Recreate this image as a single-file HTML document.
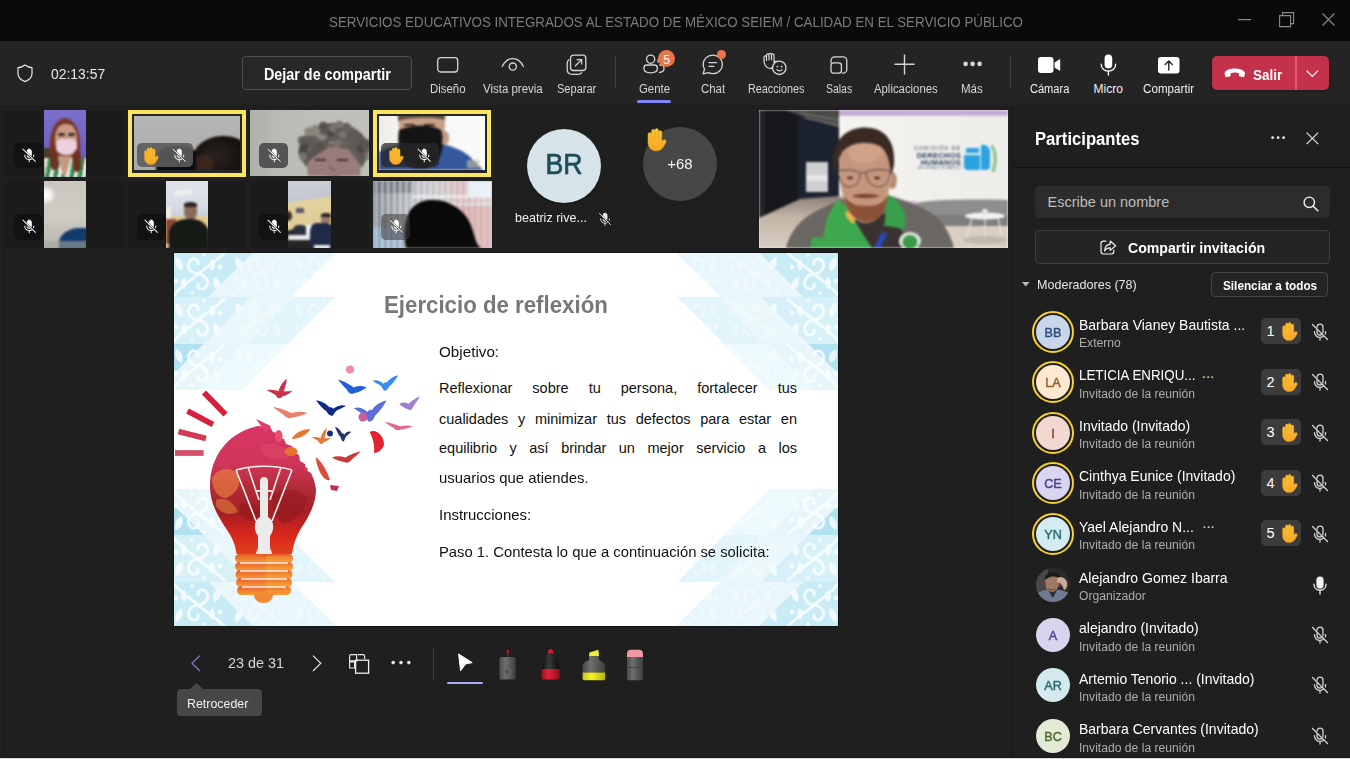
<!DOCTYPE html>
<html><head><meta charset="utf-8">
<style>
html,body{margin:0;padding:0;}
body{width:1350px;height:759px;position:relative;overflow:hidden;background:#1f1f1f;font-family:"Liberation Sans",sans-serif;}
.a{position:absolute;}
.t{position:absolute;white-space:nowrap;line-height:1;transform-origin:0 0;}
svg{position:absolute;overflow:visible;}
.lbl{position:absolute;white-space:nowrap;line-height:1;font-size:12px;color:#d6d6d6;top:82.5px;transform-origin:0 0;}
</style></head><body>
<svg width="0" height="0" style="position:absolute"><defs><linearGradient id="handg" x1="0" y1="0" x2="0" y2="1"><stop offset="0" stop-color="#fcc63c"/><stop offset="1" stop-color="#f6a623"/></linearGradient></defs></svg>
<!-- title bar -->
<div class="a" style="left:0;top:0;width:1350px;height:41px;background:#0a0a0a"></div>
<div class="t" style="left:328.5px;top:13.7px;font-size:15.5px;color:#7b7b7b;transform:scaleX(0.8605)">SERVICIOS EDUCATIVOS INTEGRADOS AL ESTADO DE MÉXICO SEIEM / CALIDAD EN EL SERVICIO PÚBLICO</div>
<svg style="left:1238px;top:19px" width="14" height="2"><rect x="0" y="0" width="13" height="1.2" fill="#8a8a8a"/></svg>
<svg style="left:1279px;top:12px" width="16" height="16"><path d="M0.6 3.6h11v11h-11z M3.6 3.6v-3h11v11h-3" fill="none" stroke="#8a8a8a" stroke-width="1.1"/></svg>
<svg style="left:1322px;top:13px" width="14" height="14"><path d="M0.5 0.5L12.5 12.5M12.5 0.5L0.5 12.5" stroke="#8a8a8a" stroke-width="1.1"/></svg>

<!-- toolbar -->
<div class="a" style="left:0;top:41px;width:1350px;height:64px;background:#242424"></div>
<svg style="left:17px;top:64px" width="17" height="19"><path d="M8 1 C5.5 3 3 3.6 1 3.6 V9.5 C1 13.5 4 16 8 17.6 C12 16 15 13.5 15 9.5 V3.6 C13 3.6 10.5 3 8 1Z" fill="none" stroke="#e6e6e6" stroke-width="1.2" stroke-linejoin="round"/></svg>
<div class="t" style="left:50.5px;top:67.2px;font-size:14.5px;color:#e8e8e8;transform:scaleX(0.96)">02:13:57</div>

<div class="a" style="left:242px;top:56px;width:168px;height:32px;border:1px solid #4e4e4e;border-radius:4px;background:#282828"></div>
<div class="t" style="left:263.5px;top:66.9px;font-size:15.6px;font-weight:bold;color:#fff;transform:scaleX(0.92)">Dejar de compartir</div>

<!-- Diseño -->
<svg style="left:437px;top:57px" width="22" height="16"><rect x="0.7" y="0.7" width="20" height="14.3" rx="3" fill="none" stroke="#d6d6d6" stroke-width="1.3"/></svg>
<div class="lbl" style="left:430px;transform:scaleX(0.95)">Diseño</div>
<!-- Vista previa -->
<svg style="left:501px;top:57px" width="24" height="16"><path d="M1.2 9.5 C4 3.5 8 1.6 11.8 1.6 C15.6 1.6 19.6 3.5 22.4 9.5" fill="none" stroke="#d6d6d6" stroke-width="1.3" stroke-linecap="round"/><circle cx="11.8" cy="9.6" r="3.6" fill="none" stroke="#d6d6d6" stroke-width="1.3"/></svg>
<div class="lbl" style="left:482.5px;transform:scaleX(0.955)">Vista previa</div>
<!-- Separar -->
<svg style="left:566px;top:54px" width="22" height="22"><path d="M3.3 5.5 C1.9 6.2 1.2 7.4 1.2 9 V15.5 C1.2 18.5 3 20.3 6 20.3 H12.5 C14.1 20.3 15.3 19.6 16 18.2" fill="none" stroke="#d6d6d6" stroke-width="1.3"/><rect x="4.5" y="1.2" width="15.3" height="15.3" rx="3" fill="none" stroke="#d6d6d6" stroke-width="1.3"/><path d="M9 12.2 L15.3 5.9 M10.6 5.6 H15.6 V10.6" fill="none" stroke="#d6d6d6" stroke-width="1.3"/></svg>
<div class="lbl" style="left:556.5px;transform:scaleX(0.92)">Separar</div>
<div class="a" style="left:614.5px;top:56px;width:1px;height:33px;background:#3d3d3d"></div>

<!-- Gente -->
<svg style="left:643px;top:54px" width="24" height="20"><circle cx="7.6" cy="5.2" r="4.1" fill="none" stroke="#d6d6d6" stroke-width="1.3"/><path d="M1 13.8 C1 12 2.3 11 4 11 H11.3 C13 11 14.3 12 14.3 13.8 V14.8 C14.3 17.4 11.6 18.8 7.6 18.8 C3.6 18.8 1 17.4 1 14.8Z" fill="none" stroke="#d6d6d6" stroke-width="1.3"/><path d="M16 18.5 C19.3 18.3 21 16.9 21 14.8 V13.8 C21 12 19.8 11 18.2 11 H16.3" fill="none" stroke="#d6d6d6" stroke-width="1.3"/><path d="M15.6 8.6 C14.6 7.4 14.8 5.2 16.4 4.4" fill="none" stroke="#d6d6d6" stroke-width="1.3"/></svg>
<div class="a" style="left:658.3px;top:50.2px;width:17px;height:17px;border-radius:50%;background:#e97548"></div>
<div class="t" style="left:663.3px;top:54.2px;font-size:12px;color:#fff">5</div>
<div class="lbl" style="left:638.5px;transform:scaleX(0.95)">Gente</div>
<div class="a" style="left:637px;top:100px;width:34px;height:2.5px;border-radius:2px;background:#7f85f5"></div>
<!-- Chat -->
<svg style="left:702px;top:54px" width="23" height="21"><path d="M10.8 1.2 C16.3 1.2 20.4 5.3 20.4 10.4 C20.4 15.5 16.3 19.6 10.8 19.6 C9.2 19.6 7.7 19.2 6.3 18.6 L1.2 19.8 L2.5 15 C1.7 13.6 1.2 12 1.2 10.4 C1.2 5.3 5.3 1.2 10.8 1.2Z" fill="none" stroke="#d6d6d6" stroke-width="1.3" stroke-linejoin="round"/><path d="M7 8.6 H14.6 M7 12.4 H11.8" stroke="#d6d6d6" stroke-width="1.3" stroke-linecap="round"/></svg>
<div class="a" style="left:717.2px;top:49.5px;width:9px;height:9px;border-radius:50%;background:#e97548"></div>
<div class="lbl" style="left:701px;transform:scaleX(0.95)">Chat</div>
<!-- Reacciones -->
<svg style="left:763px;top:53px" width="24" height="22"><path d="M9.8 13.8 L8.2 15.5 C6.3 15.5 3.6 14.6 2.2 12.3 C1.2 10.6 1 9 1 7 V4.2 C1 3.3 1.6 2.8 2.3 2.8 C3 2.8 3.5 3.3 3.5 4.2 V7.5 M3.5 6.5 V2.2 C3.5 1.4 4.1 0.9 4.8 0.9 C5.5 0.9 6 1.4 6 2.2 V6.8 M6 6.5 V1.6 C6 0.9 6.6 0.4 7.3 0.4 C8 0.4 8.5 0.9 8.5 1.6 V6.8 M8.5 6.5 V2.2 C8.5 1.4 9.1 0.9 9.8 0.9 C10.5 0.9 11 1.4 11 2.2 V9.5 C11.6 8.6 12.4 8 13.2 8" fill="none" stroke="#d6d6d6" stroke-width="1.25" stroke-linecap="round" stroke-linejoin="round"/><circle cx="16.3" cy="14.8" r="6.7" fill="#242424" stroke="#d6d6d6" stroke-width="1.3"/><circle cx="14.4" cy="13.6" r="0.9" fill="#d6d6d6"/><circle cx="18.6" cy="13.6" r="0.9" fill="#d6d6d6"/><path d="M13.9 16.6 C15.3 18.2 17.7 18.2 19.1 16.6" fill="none" stroke="#d6d6d6" stroke-width="1.2" stroke-linecap="round"/></svg>
<div class="lbl" style="left:748px;transform:scaleX(0.9)">Reacciones</div>
<!-- Salas -->
<svg style="left:829.5px;top:55.9px" width="18" height="18"><path d="M1 6.6 V4.6 C1 2.4 2.7 0.8 4.8 0.8 H13 C15.1 0.8 16.8 2.5 16.8 4.6 V13.4 C16.8 15.5 15.1 17.2 13 17.2 H12.4" fill="none" stroke="#d6d6d6" stroke-width="1.3" stroke-linecap="round"/><rect x="1" y="6.9" width="10.4" height="10.3" rx="2.6" fill="none" stroke="#d6d6d6" stroke-width="1.3"/></svg>
<div class="lbl" style="left:826px;transform:scaleX(0.87)">Salas</div>
<!-- Aplicaciones -->
<svg style="left:894px;top:54px" width="22" height="22"><path d="M10.5 0.5 V20.5 M0.5 10.2 H20.5" stroke="#d6d6d6" stroke-width="1.4"/></svg>
<div class="lbl" style="left:873.5px;transform:scaleX(0.945)">Aplicaciones</div>
<!-- Más -->
<svg style="left:963px;top:61px" width="20" height="6"><circle cx="2.6" cy="2.9" r="2.3" fill="#d6d6d6"/><circle cx="9.6" cy="2.9" r="2.3" fill="#d6d6d6"/><circle cx="16.6" cy="2.9" r="2.3" fill="#d6d6d6"/></svg>
<div class="lbl" style="left:961px;transform:scaleX(0.96)">Más</div>
<div class="a" style="left:1010px;top:56px;width:1px;height:33px;background:#3d3d3d"></div>
<!-- Cámara -->
<svg style="left:1038px;top:57px" width="23" height="17"><rect x="0" y="0" width="15.5" height="16" rx="3" fill="#ffffff"/><path d="M16.6 5.6 L21.2 2.4 C21.7 2.1 22.2 2.4 22.2 3 V13 C22.2 13.6 21.7 13.9 21.2 13.6 L16.6 10.4Z" fill="#ffffff"/></svg>
<div class="lbl" style="left:1029.5px;color:#f0f0f0;transform:scaleX(0.92)">Cámara</div>
<!-- Micro -->
<svg style="left:1100px;top:53.5px" width="17" height="22"><rect x="4.6" y="0.5" width="7.6" height="14" rx="3.8" fill="#ffffff"/><path d="M1.2 10.2 C1.2 14.4 4.4 17.2 8.4 17.2 C12.4 17.2 15.6 14.4 15.6 10.2" fill="none" stroke="#ffffff" stroke-width="1.3" stroke-linecap="round"/><path d="M8.4 17.2 V21" stroke="#ffffff" stroke-width="1.3" stroke-linecap="round"/></svg>
<div class="lbl" style="left:1093.5px;color:#f0f0f0;transform:scaleX(1.0)">Micro</div>
<!-- Compartir -->
<svg style="left:1157.5px;top:56.5px" width="22" height="17"><rect x="0" y="0" width="21.5" height="16.5" rx="3" fill="#ffffff"/><path d="M10.75 13 V4.2 M7.2 7.6 L10.75 4 L14.3 7.6" fill="none" stroke="#242424" stroke-width="1.4" stroke-linecap="round" stroke-linejoin="round"/></svg>
<div class="lbl" style="left:1143px;color:#f0f0f0;transform:scaleX(0.97)">Compartir</div>
<!-- Salir -->
<div class="a" style="left:1212px;top:56px;width:117px;height:34px;border-radius:5px;background:#c4314b;box-shadow:0 1px 3px rgba(0,0,0,0.35)"></div>
<div class="a" style="left:1295px;top:56px;width:1.5px;height:34px;background:#e8586f"></div>
<svg style="left:1223.5px;top:68px" width="22" height="10"><path d="M10.8 0.6 C6.5 0.6 3.2 1.8 1.4 3.6 C0.6 4.4 0.5 5.4 0.8 6.6 L1.3 8.2 C1.5 8.9 2.2 9.3 2.9 9.1 L5.6 8.5 C6.3 8.3 6.7 7.8 6.7 7.1 V5.2 C8 4.8 9.4 4.6 10.8 4.6 C12.2 4.6 13.6 4.8 14.9 5.2 V7.1 C14.9 7.8 15.3 8.3 16 8.5 L18.7 9.1 C19.4 9.3 20.1 8.9 20.3 8.2 L20.8 6.6 C21.1 5.4 21 4.4 20.2 3.6 C18.4 1.8 15.1 0.6 10.8 0.6Z" fill="#fff"/></svg>
<div class="t" style="left:1253px;top:66.7px;font-size:15.4px;font-weight:bold;color:#fff;transform:scaleX(0.875)">Salir</div>
<svg style="left:1306px;top:70px" width="13" height="8"><path d="M0.6 0.6 L6.3 6.3 L12 0.6" fill="none" stroke="#fff" stroke-width="1.2"/></svg>
<!-- video strip -->
<div class="a" style="left:6px;top:110px;width:118px;height:66px;background:#1b1b1b"></div><div class="a" style="left:250px;top:110px;width:119px;height:66px;background:#1b1b1b"></div><div class="a" style="left:6px;top:181px;width:118px;height:67px;background:#1b1b1b"></div><div class="a" style="left:128px;top:181px;width:118px;height:67px;background:#1b1b1b"></div><div class="a" style="left:250px;top:181px;width:119px;height:67px;background:#1b1b1b"></div><div class="a" style="left:43.5px;top:110px;width:42.5px;height:66.5px;overflow:hidden;background:linear-gradient(180deg,#7a70cc 0,#6d63bf 60%,#5e55ad 100%)"><div class="a" style="left:0;top:0;width:100%;height:100%;filter:blur(0.8px)">
<div class="a" style="left:-2px;top:38px;width:10px;height:30px;background:#4a3a2c"></div>
<div class="a" style="left:6px;top:8px;width:30px;height:52px;border-radius:50% 50% 30% 30%;background:#7a3624"></div>
<div class="a" style="left:11px;top:14px;width:22px;height:30px;border-radius:45%;background:#c99b84"></div>
<div class="a" style="left:14px;top:23px;width:7px;height:2.5px;background:#3a2a2a;border-radius:2px"></div><div class="a" style="left:24px;top:23px;width:7px;height:2.5px;background:#3a2a2a;border-radius:2px"></div>
<div class="a" style="left:12px;top:29px;width:21px;height:16px;border-radius:30% 30% 45% 45%;background:#ecd0de"></div>
<div class="a" style="left:0;top:48px;width:43px;height:20px;background:repeating-linear-gradient(100deg,#f1efe6 0 4px,#33a35a 4px 7px,#1d1d1d 7px 8px)"></div>
<div class="a" style="left:14px;top:46px;width:14px;height:20px;background:#c49a82;clip-path:polygon(0 0,100% 0,60% 100%,40% 100%)"></div>
<div class="a" style="left:6px;top:40px;width:8px;height:20px;background:#6e3020;border-radius:40%"></div>
<div class="a" style="left:29px;top:40px;width:8px;height:22px;background:#6e3020;border-radius:40%"></div>
</div>
</div><div class="a" style="left:14.3px;top:142.8px;width:28.8px;height:25px;border-radius:5px;background:#121212"></div><svg style="left:21.5px;top:148px" width="14.5" height="14.5" viewBox="0 0 18 18"><path d="M6.2 7 V4.4 C6.2 2.6 7.4 1.2 9 1.2 C10.6 1.2 11.8 2.6 11.8 4.4 V9 C11.8 9.4 11.7 9.8 11.6 10.2 M10.4 11.8 C10 12 9.5 12.1 9 12.1 C7.4 12.1 6.2 10.8 6.2 9" fill="#fff" stroke="#fff" stroke-width="0.8"/><path d="M3.4 8.8 C3.4 12 5.9 14.4 9 14.4 C10.3 14.4 11.4 14 12.3 13.3 M14.4 10.8 C14.5 10.2 14.6 9.6 14.6 8.8 M9 14.4 V17" fill="none" stroke="#f4f4f4" stroke-width="1.3" stroke-linecap="round"/><path d="M1.2 1.4 L16.6 16.6" stroke="#111" stroke-width="2.8" stroke-linecap="round" opacity="0.5"/><path d="M1.2 1.4 L16.6 16.6" stroke="#f4f4f4" stroke-width="1.3" stroke-linecap="round"/></svg><div class="a" style="left:128px;top:109.5px;width:118px;height:67px;background:#fbe561"></div>
<div class="a" style="left:132px;top:113.5px;width:110px;height:59px;background:#262626"></div>
<div class="a" style="left:134px;top:115.8px;width:106px;height:54px;overflow:hidden;background:linear-gradient(180deg,#b6b6b4 0,#b0b0ae 50%,#a9a9a7 100%)"><div class="a" style="left:0;top:0;width:100%;height:100%;filter:blur(0.8px)">
<div class="a" style="left:58px;top:20px;width:60px;height:50px;border-radius:50% 45% 0 0;background:radial-gradient(ellipse at 40% 40%,#2a2320 0,#120e0c 60%)"></div>
<div class="a" style="left:60px;top:38px;width:20px;height:20px;border-radius:50%;background:#4a2e20;opacity:0.6"></div>
<div class="a" style="left:22px;top:30px;width:40px;height:30px;border-radius:40% 30% 0 0;background:#0b0e16"></div>
</div>
</div>
<div class="a" style="left:136.5px;top:142.8px;width:56.5px;height:24.6px;border-radius:5px;background:rgba(92,92,92,0.9)"></div><svg style="left:143px;top:147px" width="16" height="17.9" viewBox="0 0 17 19"><path transform="translate(17 0) scale(-1 1)" d="M4.2 10.5 V3.6 C4.2 2.7 4.8 2.1 5.6 2.1 C6.4 2.1 7 2.7 7 3.6 V8.6 V1.9 C7 1 7.6 0.4 8.4 0.4 C9.2 0.4 9.8 1 9.8 1.9 V8.6 V2.6 C9.8 1.7 10.4 1.1 11.2 1.1 C12 1.1 12.6 1.7 12.6 2.6 V9.6 V5.2 C12.6 4.3 13.2 3.7 14 3.7 C14.8 3.7 15.4 4.3 15.4 5.2 V11.4 C15.4 15.6 12.7 18.6 8.6 18.6 C5.6 18.6 3.8 17 2.5 14.6 L0.9 11.7 C0.5 10.9 0.7 10.1 1.4 9.7 C2.1 9.3 2.9 9.5 3.4 10.2 Z" fill="url(#handg)" stroke="#eaa21a" stroke-width="0.4"/></svg><svg style="left:172px;top:148px" width="14.5" height="14.5" viewBox="0 0 18 18"><path d="M6.2 7 V4.4 C6.2 2.6 7.4 1.2 9 1.2 C10.6 1.2 11.8 2.6 11.8 4.4 V9 C11.8 9.4 11.7 9.8 11.6 10.2 M10.4 11.8 C10 12 9.5 12.1 9 12.1 C7.4 12.1 6.2 10.8 6.2 9" fill="#fff" stroke="#fff" stroke-width="0.8"/><path d="M3.4 8.8 C3.4 12 5.9 14.4 9 14.4 C10.3 14.4 11.4 14 12.3 13.3 M14.4 10.8 C14.5 10.2 14.6 9.6 14.6 8.8 M9 14.4 V17" fill="none" stroke="#f4f4f4" stroke-width="1.3" stroke-linecap="round"/><path d="M1.2 1.4 L16.6 16.6" stroke="#111" stroke-width="2.8" stroke-linecap="round" opacity="0.5"/><path d="M1.2 1.4 L16.6 16.6" stroke="#f4f4f4" stroke-width="1.3" stroke-linecap="round"/></svg><div class="a" style="left:250px;top:110px;width:118.5px;height:66px;overflow:hidden;background:linear-gradient(90deg,#b3b7ae 0,#bcbdb6 35%,#c0c0bb 100%)">
<svg style="left:0;top:0;filter:blur(0.8px)" width="119" height="66">
<ellipse cx="84" cy="40" rx="35" ry="27" fill="#5e5955"/>
<circle cx="66.2" cy="33.6" r="3.4" fill="#65605b"/><circle cx="82.2" cy="34.9" r="4.0" fill="#8a847e"/><circle cx="67.6" cy="22.4" r="5.0" fill="#8a847e"/><circle cx="86.8" cy="33.8" r="3.5" fill="#7a746e"/><circle cx="65.8" cy="19.5" r="4.8" fill="#8a847e"/><circle cx="100.4" cy="38.2" r="2.7" fill="#65605b"/><circle cx="52.9" cy="42.1" r="4.6" fill="#4a4541"/><circle cx="82.1" cy="39.9" r="4.7" fill="#8a847e"/><circle cx="76.9" cy="42.8" r="3.6" fill="#7a746e"/><circle cx="59.2" cy="21.8" r="4.9" fill="#8a847e"/><circle cx="103.0" cy="44.8" r="3.6" fill="#8a847e"/><circle cx="89.0" cy="33.2" r="3.5" fill="#7a746e"/><circle cx="111.5" cy="38.6" r="4.8" fill="#4a4541"/><circle cx="117.4" cy="38.2" r="2.9" fill="#4a4541"/><circle cx="115.6" cy="46.6" r="3.9" fill="#7a746e"/><circle cx="93.0" cy="49.6" r="3.2" fill="#5a5550"/><circle cx="54.3" cy="44.7" r="5.0" fill="#5a5550"/><circle cx="73.4" cy="16.4" r="4.7" fill="#5a5550"/><circle cx="70.0" cy="41.7" r="4.7" fill="#5a5550"/><circle cx="91.1" cy="41.4" r="3.4" fill="#65605b"/><circle cx="72.5" cy="45.7" r="5.0" fill="#65605b"/><circle cx="86.4" cy="48.2" r="4.9" fill="#4a4541"/><circle cx="91.5" cy="19.6" r="2.6" fill="#4a4541"/><circle cx="71.3" cy="48.5" r="4.7" fill="#8a847e"/><circle cx="75.6" cy="45.3" r="3.5" fill="#65605b"/><circle cx="96.3" cy="17.7" r="4.9" fill="#65605b"/><circle cx="68.4" cy="36.8" r="4.3" fill="#4a4541"/><circle cx="79.7" cy="23.3" r="3.3" fill="#4a4541"/><circle cx="89.4" cy="14.7" r="4.0" fill="#7a746e"/><circle cx="54.1" cy="36.6" r="3.7" fill="#4a4541"/><circle cx="91.4" cy="24.0" r="3.7" fill="#65605b"/><circle cx="54.1" cy="38.3" r="4.9" fill="#4a4541"/><circle cx="92.7" cy="24.8" r="4.0" fill="#7a746e"/><circle cx="74.7" cy="25.3" r="3.4" fill="#65605b"/><circle cx="68.0" cy="42.3" r="2.8" fill="#5a5550"/><circle cx="116.1" cy="38.6" r="2.8" fill="#65605b"/><circle cx="65.1" cy="42.9" r="3.1" fill="#7a746e"/><circle cx="96.1" cy="37.4" r="2.7" fill="#65605b"/><circle cx="71.9" cy="26.0" r="4.6" fill="#8a847e"/><circle cx="105.1" cy="48.6" r="2.7" fill="#7a746e"/><circle cx="110.2" cy="30.2" r="3.1" fill="#5a5550"/><circle cx="71.4" cy="44.1" r="3.9" fill="#4a4541"/><circle cx="73.1" cy="43.8" r="2.7" fill="#65605b"/><circle cx="73.5" cy="18.7" r="3.2" fill="#4a4541"/><circle cx="81.6" cy="36.8" r="3.2" fill="#65605b"/><circle cx="77.8" cy="47.1" r="2.9" fill="#5a5550"/><circle cx="82.5" cy="44.0" r="4.1" fill="#65605b"/><circle cx="79.5" cy="48.2" r="4.8" fill="#7a746e"/><circle cx="52.2" cy="30.4" r="4.4" fill="#65605b"/><circle cx="115.5" cy="33.6" r="4.7" fill="#5a5550"/><circle cx="108.3" cy="49.0" r="2.8" fill="#7a746e"/><circle cx="53.1" cy="46.5" r="4.2" fill="#7a746e"/><circle cx="111.0" cy="46.4" r="3.9" fill="#5a5550"/><circle cx="82.7" cy="18.3" r="3.8" fill="#7a746e"/><circle cx="95.1" cy="32.9" r="3.5" fill="#65605b"/><circle cx="116.1" cy="33.5" r="4.5" fill="#5a5550"/><circle cx="73.9" cy="21.1" r="3.8" fill="#5a5550"/><circle cx="61.6" cy="42.5" r="4.8" fill="#7a746e"/><circle cx="92.7" cy="45.1" r="2.6" fill="#4a4541"/><circle cx="66.9" cy="36.3" r="3.8" fill="#5a5550"/><circle cx="82.2" cy="42.0" r="2.5" fill="#5a5550"/><circle cx="53.4" cy="31.4" r="2.6" fill="#5a5550"/>
<path d="M58 66 C56 56 58 46 64 40 C72 36 94 36 104 42 C110 50 112 58 110 66Z" fill="#9a7c7c"/>
<path d="M56 44 C62 36 70 34 78 38 C72 42 64 46 58 52Z" fill="#5a5450"/>
<path d="M96 36 C104 38 112 46 114 58 L108 52Z" fill="#625d58"/>
<path d="M66 50 h9 M88 50 h9" stroke="#3d3030" stroke-width="2.2" stroke-linecap="round"/>
<path d="M80 56 C81 60 84 61 86 59" stroke="#7a5a5a" stroke-width="1.5" fill="none"/>
<rect x="0" y="0" width="18" height="66" fill="#a6aca2" opacity="0.35"/>
</svg>
</div>
<div class="a" style="left:259px;top:142.8px;width:29px;height:25px;border-radius:5px;background:#545454"></div><svg style="left:266.5px;top:148px" width="14.5" height="14.5" viewBox="0 0 18 18"><path d="M6.2 7 V4.4 C6.2 2.6 7.4 1.2 9 1.2 C10.6 1.2 11.8 2.6 11.8 4.4 V9 C11.8 9.4 11.7 9.8 11.6 10.2 M10.4 11.8 C10 12 9.5 12.1 9 12.1 C7.4 12.1 6.2 10.8 6.2 9" fill="#fff" stroke="#fff" stroke-width="0.8"/><path d="M3.4 8.8 C3.4 12 5.9 14.4 9 14.4 C10.3 14.4 11.4 14 12.3 13.3 M14.4 10.8 C14.5 10.2 14.6 9.6 14.6 8.8 M9 14.4 V17" fill="none" stroke="#f4f4f4" stroke-width="1.3" stroke-linecap="round"/><path d="M1.2 1.4 L16.6 16.6" stroke="#111" stroke-width="2.8" stroke-linecap="round" opacity="0.5"/><path d="M1.2 1.4 L16.6 16.6" stroke="#f4f4f4" stroke-width="1.3" stroke-linecap="round"/></svg><div class="a" style="left:373px;top:109.5px;width:118px;height:67px;background:#fbe561"></div>
<div class="a" style="left:377px;top:113.5px;width:110px;height:59px;background:#262626"></div>
<div class="a" style="left:379px;top:115.8px;width:105.5px;height:54px;overflow:hidden;background:linear-gradient(90deg,#eeece8 0,#f7f7f6 30%,#fafafa 100%)">
<svg style="left:0;top:0;filter:blur(0.8px)" width="106" height="54">
<path d="M0 36 C10 30 30 26 44 30 C60 26 78 30 90 40 C96 46 100 50 104 54 H0Z" fill="#2e4e92"/>
<path d="M60 28 C72 28 84 36 92 46 L96 54 H60Z" fill="#35579c"/>
<path d="M20 -2 H65 C67 8 66 20 62 30 C56 38 30 38 24 30 C20 20 19 8 20 -2Z" fill="#c8a088"/>
<path d="M19 -2 H66 V4 C56 1 30 1 19 5Z" fill="#5b4a3e"/>
<path d="M26 9 h9 M46 9 h9" stroke="#3a2a22" stroke-width="2.2" stroke-linecap="round"/>
<path d="M20 14 C34 8 52 8 62 14 C66 24 64 40 56 48 C48 54 34 54 26 48 C20 40 18 24 20 14Z" fill="#141414"/>
<path d="M64 16 C67 14 70 16 70 22 C70 28 66 30 63 28Z" fill="#c39a82"/>
<rect x="88" y="44" width="12" height="8" fill="#bab7a6" opacity="0.7"/>
</svg>
</div>
<div class="a" style="left:381px;top:142.8px;width:57.5px;height:24.6px;border-radius:5px;background:rgba(40,40,40,0.75)"></div><svg style="left:388px;top:147px" width="16" height="17.9" viewBox="0 0 17 19"><path transform="translate(17 0) scale(-1 1)" d="M4.2 10.5 V3.6 C4.2 2.7 4.8 2.1 5.6 2.1 C6.4 2.1 7 2.7 7 3.6 V8.6 V1.9 C7 1 7.6 0.4 8.4 0.4 C9.2 0.4 9.8 1 9.8 1.9 V8.6 V2.6 C9.8 1.7 10.4 1.1 11.2 1.1 C12 1.1 12.6 1.7 12.6 2.6 V9.6 V5.2 C12.6 4.3 13.2 3.7 14 3.7 C14.8 3.7 15.4 4.3 15.4 5.2 V11.4 C15.4 15.6 12.7 18.6 8.6 18.6 C5.6 18.6 3.8 17 2.5 14.6 L0.9 11.7 C0.5 10.9 0.7 10.1 1.4 9.7 C2.1 9.3 2.9 9.5 3.4 10.2 Z" fill="url(#handg)" stroke="#eaa21a" stroke-width="0.4"/></svg><svg style="left:417px;top:148px" width="14.5" height="14.5" viewBox="0 0 18 18"><path d="M6.2 7 V4.4 C6.2 2.6 7.4 1.2 9 1.2 C10.6 1.2 11.8 2.6 11.8 4.4 V9 C11.8 9.4 11.7 9.8 11.6 10.2 M10.4 11.8 C10 12 9.5 12.1 9 12.1 C7.4 12.1 6.2 10.8 6.2 9" fill="#fff" stroke="#fff" stroke-width="0.8"/><path d="M3.4 8.8 C3.4 12 5.9 14.4 9 14.4 C10.3 14.4 11.4 14 12.3 13.3 M14.4 10.8 C14.5 10.2 14.6 9.6 14.6 8.8 M9 14.4 V17" fill="none" stroke="#f4f4f4" stroke-width="1.3" stroke-linecap="round"/><path d="M1.2 1.4 L16.6 16.6" stroke="#111" stroke-width="2.8" stroke-linecap="round" opacity="0.5"/><path d="M1.2 1.4 L16.6 16.6" stroke="#f4f4f4" stroke-width="1.3" stroke-linecap="round"/></svg><div class="a" style="left:43.5px;top:181px;width:42.5px;height:67px;overflow:hidden;background:linear-gradient(180deg,#c9c6c0 0,#cfccc5 50%,#b9b6ae 100%)"><div class="a" style="left:0;top:0;width:100%;height:100%;filter:blur(0.8px)">
<div class="a" style="left:-8px;top:4px;width:20px;height:20px;border-radius:50%;background:radial-gradient(circle,#ffffff 0,#f4f2ee 35%,rgba(210,207,200,0) 70%)"></div>
<div class="a" style="left:15px;top:47px;width:40px;height:30px;border-radius:50% 0 0 0;background:#133a6e"></div>
<div class="a" style="left:0;top:60px;width:43px;height:8px;background:#9fa59a;opacity:0.6"></div>
</div>
</div>
<div class="a" style="left:14.3px;top:214px;width:28.8px;height:25.5px;border-radius:5px;background:#121212"></div><svg style="left:21.5px;top:219px" width="14.5" height="14.5" viewBox="0 0 18 18"><path d="M6.2 7 V4.4 C6.2 2.6 7.4 1.2 9 1.2 C10.6 1.2 11.8 2.6 11.8 4.4 V9 C11.8 9.4 11.7 9.8 11.6 10.2 M10.4 11.8 C10 12 9.5 12.1 9 12.1 C7.4 12.1 6.2 10.8 6.2 9" fill="#fff" stroke="#fff" stroke-width="0.8"/><path d="M3.4 8.8 C3.4 12 5.9 14.4 9 14.4 C10.3 14.4 11.4 14 12.3 13.3 M14.4 10.8 C14.5 10.2 14.6 9.6 14.6 8.8 M9 14.4 V17" fill="none" stroke="#f4f4f4" stroke-width="1.3" stroke-linecap="round"/><path d="M1.2 1.4 L16.6 16.6" stroke="#111" stroke-width="2.8" stroke-linecap="round" opacity="0.5"/><path d="M1.2 1.4 L16.6 16.6" stroke="#f4f4f4" stroke-width="1.3" stroke-linecap="round"/></svg><div class="a" style="left:166px;top:181px;width:42px;height:67px;overflow:hidden;background:linear-gradient(180deg,#dfe4ea 0,#d8dde4 35%,#c9d3dd 50%,#e9c98f 55%,#e5c184 75%,#c89b6a 100%)"><div class="a" style="left:0;top:0;width:100%;height:100%;filter:blur(0.8px)">
<div class="a" style="left:8px;top:9px;width:18px;height:5px;background:#eef0ef;transform:rotate(-8deg)"></div>
<div class="a" style="left:0;top:25px;width:5px;height:40px;background:#f2ede4"></div>
<div class="a" style="left:0;top:38px;width:10px;height:25px;background:#8a4a32"></div>
<div class="a" style="left:18px;top:22px;width:13px;height:17px;border-radius:45%;background:#8a6a58"></div>
<div class="a" style="left:18px;top:21px;width:13px;height:5px;border-radius:50% 50% 0 0;background:#2a2220"></div>
<div class="a" style="left:3px;top:38px;width:40px;height:32px;border-radius:45% 45% 0 0;background:#151a14"></div>
</div>
</div>
<div class="a" style="left:136.5px;top:214px;width:29px;height:25.5px;border-radius:5px;background:#121212"></div><svg style="left:144px;top:219px" width="14.5" height="14.5" viewBox="0 0 18 18"><path d="M6.2 7 V4.4 C6.2 2.6 7.4 1.2 9 1.2 C10.6 1.2 11.8 2.6 11.8 4.4 V9 C11.8 9.4 11.7 9.8 11.6 10.2 M10.4 11.8 C10 12 9.5 12.1 9 12.1 C7.4 12.1 6.2 10.8 6.2 9" fill="#fff" stroke="#fff" stroke-width="0.8"/><path d="M3.4 8.8 C3.4 12 5.9 14.4 9 14.4 C10.3 14.4 11.4 14 12.3 13.3 M14.4 10.8 C14.5 10.2 14.6 9.6 14.6 8.8 M9 14.4 V17" fill="none" stroke="#f4f4f4" stroke-width="1.3" stroke-linecap="round"/><path d="M1.2 1.4 L16.6 16.6" stroke="#111" stroke-width="2.8" stroke-linecap="round" opacity="0.5"/><path d="M1.2 1.4 L16.6 16.6" stroke="#f4f4f4" stroke-width="1.3" stroke-linecap="round"/></svg><div class="a" style="left:288px;top:181px;width:42.5px;height:67px;overflow:hidden;background:linear-gradient(172deg,#cdd0d8 0,#c4c7cf 28%,#e3d29f 31%,#e0cd97 65%,#2a2a2a 70%,#222 100%)"><div class="a" style="left:0;top:0;width:100%;height:100%;filter:blur(0.8px)">
<div class="a" style="left:8px;top:27px;width:8px;height:5px;background:#5a5a6a"></div>
<div class="a" style="left:-3px;top:30px;width:7px;height:10px;border-radius:50%;background:#3a2a22"></div>
<div class="a" style="left:5px;top:44px;width:14px;height:12px;background:#2a3040;border-radius:40% 40% 0 0"></div>
<div class="a" style="left:18px;top:44px;width:6px;height:12px;background:#f4f4f4"></div>
<div class="a" style="left:0;top:54px;width:24px;height:5px;background:#e8e8ea"></div>
<div class="a" style="left:33px;top:33px;width:10px;height:11px;border-radius:45%;background:#9a7a6a"></div>
<div class="a" style="left:33px;top:32px;width:10px;height:4px;border-radius:50% 50% 0 0;background:#2a2220"></div>
<div class="a" style="left:22px;top:42px;width:22px;height:28px;border-radius:30% 30% 0 0;background:#1f2a48"></div>
<div class="a" style="left:26px;top:64px;width:16px;height:4px;background:#f0f0f0"></div>
</div>
</div>
<div class="a" style="left:259px;top:214px;width:29px;height:25.5px;border-radius:5px;background:#121212"></div><svg style="left:266.5px;top:219px" width="14.5" height="14.5" viewBox="0 0 18 18"><path d="M6.2 7 V4.4 C6.2 2.6 7.4 1.2 9 1.2 C10.6 1.2 11.8 2.6 11.8 4.4 V9 C11.8 9.4 11.7 9.8 11.6 10.2 M10.4 11.8 C10 12 9.5 12.1 9 12.1 C7.4 12.1 6.2 10.8 6.2 9" fill="#fff" stroke="#fff" stroke-width="0.8"/><path d="M3.4 8.8 C3.4 12 5.9 14.4 9 14.4 C10.3 14.4 11.4 14 12.3 13.3 M14.4 10.8 C14.5 10.2 14.6 9.6 14.6 8.8 M9 14.4 V17" fill="none" stroke="#f4f4f4" stroke-width="1.3" stroke-linecap="round"/><path d="M1.2 1.4 L16.6 16.6" stroke="#111" stroke-width="2.8" stroke-linecap="round" opacity="0.5"/><path d="M1.2 1.4 L16.6 16.6" stroke="#f4f4f4" stroke-width="1.3" stroke-linecap="round"/></svg><div class="a" style="left:373px;top:181px;width:118.5px;height:67px;overflow:hidden;background:#b9bcc2"><div class="a" style="left:0;top:0;width:100%;height:100%;filter:blur(0.8px)">
<svg style="left:0;top:0" width="119" height="67">
<defs><linearGradient id="t8g" x1="0" y1="0" x2="1" y2="0"><stop offset="0" stop-color="#7d848c"/><stop offset="0.3" stop-color="#b5b8bc"/><stop offset="0.55" stop-color="#c8c6c8"/><stop offset="0.75" stop-color="#d9b4b4"/><stop offset="1" stop-color="#dcc8c8"/></linearGradient></defs>
<rect x="0" y="0" width="119" height="67" fill="url(#t8g)"/>
<rect x="0" y="0" width="40" height="12" fill="#5e646c" opacity="0.6"/>
<rect x="95" y="0" width="24" height="16" fill="#e6f2f8"/>
<rect x="0" y="46" width="30" height="21" fill="#8fb0d4" opacity="0.7"/>
<rect x="2" y="0" width="2.5" height="67" fill="#f0f0f2" opacity="0.55"/><rect x="8" y="0" width="2.5" height="67" fill="#f0f0f2" opacity="0.55"/><rect x="14" y="0" width="2.5" height="67" fill="#f0f0f2" opacity="0.55"/><rect x="20" y="0" width="2.5" height="67" fill="#f0f0f2" opacity="0.55"/><rect x="26" y="0" width="2.5" height="67" fill="#f0f0f2" opacity="0.55"/><rect x="32" y="0" width="2.5" height="67" fill="#f0f0f2" opacity="0.55"/><rect x="38" y="0" width="2.5" height="67" fill="#f0f0f2" opacity="0.55"/><rect x="44" y="0" width="2.5" height="67" fill="#f0f0f2" opacity="0.55"/><rect x="50" y="0" width="2.5" height="67" fill="#f0f0f2" opacity="0.55"/><rect x="56" y="0" width="2.5" height="67" fill="#f0f0f2" opacity="0.55"/><rect x="62" y="0" width="2.5" height="67" fill="#f0f0f2" opacity="0.55"/><rect x="68" y="0" width="2.5" height="67" fill="#f0f0f2" opacity="0.55"/><rect x="74" y="0" width="2.5" height="67" fill="#f0f0f2" opacity="0.55"/><rect x="80" y="0" width="2.5" height="67" fill="#f0f0f2" opacity="0.55"/><rect x="86" y="0" width="2.5" height="67" fill="#f0f0f2" opacity="0.55"/><rect x="92" y="0" width="2.5" height="67" fill="#f0f0f2" opacity="0.55"/><rect x="98" y="0" width="2.5" height="67" fill="#f0f0f2" opacity="0.55"/><rect x="104" y="0" width="2.5" height="67" fill="#f0f0f2" opacity="0.55"/><rect x="110" y="0" width="2.5" height="67" fill="#f0f0f2" opacity="0.55"/><rect x="116" y="0" width="2.5" height="67" fill="#f0f0f2" opacity="0.55"/>
<rect x="40" y="14" width="79" height="3" fill="#eef0f2" opacity="0.8"/>
<rect x="40" y="22" width="79" height="2.5" fill="#e0e4e8" opacity="0.7"/>
<rect x="75" y="25" width="44" height="42" fill="#d89c9c" opacity="0.35"/>
<path d="M33 67 C30 50 32 34 40 26 C48 18 60 18 70 20 C84 24 96 34 100 50 C102 58 104 64 108 67Z" fill="#0b0909"/>
</svg>
</div></div>
<div class="a" style="left:381px;top:214px;width:29px;height:25.5px;border-radius:5px;background:rgba(60,60,60,0.55)"></div><svg style="left:388.5px;top:219px" width="14.5" height="14.5" viewBox="0 0 18 18"><path d="M6.2 7 V4.4 C6.2 2.6 7.4 1.2 9 1.2 C10.6 1.2 11.8 2.6 11.8 4.4 V9 C11.8 9.4 11.7 9.8 11.6 10.2 M10.4 11.8 C10 12 9.5 12.1 9 12.1 C7.4 12.1 6.2 10.8 6.2 9" fill="#fff" stroke="#fff" stroke-width="0.8"/><path d="M3.4 8.8 C3.4 12 5.9 14.4 9 14.4 C10.3 14.4 11.4 14 12.3 13.3 M14.4 10.8 C14.5 10.2 14.6 9.6 14.6 8.8 M9 14.4 V17" fill="none" stroke="#f4f4f4" stroke-width="1.3" stroke-linecap="round"/><path d="M1.2 1.4 L16.6 16.6" stroke="#111" stroke-width="2.8" stroke-linecap="round" opacity="0.5"/><path d="M1.2 1.4 L16.6 16.6" stroke="#f4f4f4" stroke-width="1.3" stroke-linecap="round"/></svg><div class="a" style="left:526.5px;top:128.5px;width:74px;height:74px;border-radius:50%;background:#d6e3e9;box-shadow:0 1px 2px rgba(0,0,0,0.4)"></div>
<div class="t" style="left:526.5px;top:150px;width:74px;text-align:center;font-size:29px;color:#1e4c58;-webkit-text-stroke:0.7px #1e4c58;transform:scaleX(0.92);transform-origin:50% 0">BR</div>
<div class="t" style="left:514.5px;top:211.4px;font-size:13.5px;color:#f0f0f0;transform:scaleX(0.93)">beatriz rive...</div><svg style="left:598px;top:211.5px" width="14" height="14" viewBox="0 0 18 18"><path d="M6.2 7 V4.4 C6.2 2.6 7.4 1.2 9 1.2 C10.6 1.2 11.8 2.6 11.8 4.4 V9 C11.8 9.4 11.7 9.8 11.6 10.2 M10.4 11.8 C10 12 9.5 12.1 9 12.1 C7.4 12.1 6.2 10.8 6.2 9" fill="#f0f0f0" stroke="#e6e6e6" stroke-width="0.6"/><path d="M3.4 8.8 C3.4 12 5.9 14.4 9 14.4 C10.3 14.4 11.4 14 12.3 13.3 M14.4 10.8 C14.5 10.2 14.6 9.6 14.6 8.8 M9 14.4 V17" fill="none" stroke="#e6e6e6" stroke-width="1.2" stroke-linecap="round"/><path d="M1.8 1.8 L16.2 16.2" stroke="#222" stroke-width="2.6" stroke-linecap="round" opacity="0.35"/><path d="M1.8 1.8 L16.2 16.2" stroke="#e6e6e6" stroke-width="1.2" stroke-linecap="round"/></svg><div class="a" style="left:643px;top:126.5px;width:74px;height:74px;border-radius:50%;background:#474747"></div>
<div class="t" style="left:643px;top:157px;width:74px;text-align:center;font-size:14.5px;color:#f4f4f4;transform:scaleX(1.03);transform-origin:50% 0">+68</div><svg style="left:645.5px;top:127.5px" width="21" height="23.5" viewBox="0 0 17 19"><path transform="translate(17 0) scale(-1 1)" d="M4.2 10.5 V3.6 C4.2 2.7 4.8 2.1 5.6 2.1 C6.4 2.1 7 2.7 7 3.6 V8.6 V1.9 C7 1 7.6 0.4 8.4 0.4 C9.2 0.4 9.8 1 9.8 1.9 V8.6 V2.6 C9.8 1.7 10.4 1.1 11.2 1.1 C12 1.1 12.6 1.7 12.6 2.6 V9.6 V5.2 C12.6 4.3 13.2 3.7 14 3.7 C14.8 3.7 15.4 4.3 15.4 5.2 V11.4 C15.4 15.6 12.7 18.6 8.6 18.6 C5.6 18.6 3.8 17 2.5 14.6 L0.9 11.7 C0.5 10.9 0.7 10.1 1.4 9.7 C2.1 9.3 2.9 9.5 3.4 10.2 Z" fill="url(#handg)" stroke="#eaa21a" stroke-width="0.4"/></svg><!-- presenter -->
<div class="a" style="left:759px;top:110px;width:249px;height:138px;overflow:hidden;background:#f2f1ed">
<svg style="left:0;top:0;filter:blur(0.8px)" width="249" height="138" viewBox="759 110 249 138">
<defs>
<linearGradient id="floor" x1="0" y1="0" x2="0" y2="1"><stop offset="0" stop-color="#8a7e74"/><stop offset="0.4" stop-color="#c2b4a6"/><stop offset="1" stop-color="#d9cfc5"/></linearGradient>
<linearGradient id="wall" x1="0" y1="0" x2="1" y2="0"><stop offset="0" stop-color="#f4f3ef"/><stop offset="1" stop-color="#eeede9"/></linearGradient>
<radialGradient id="face" cx="0.5" cy="0.45" r="0.6"><stop offset="0" stop-color="#d6a38a"/><stop offset="0.7" stop-color="#b98068"/><stop offset="1" stop-color="#8e5a45"/></radialGradient>
</defs>
<rect x="839" y="110" width="169" height="138" fill="url(#wall)"/>
<rect x="839" y="110" width="169" height="6" fill="#cdb6dc"/>
<rect x="839" y="112" width="169" height="2" fill="#b592c8" opacity="0.6"/>
<!-- left dark area -->
<rect x="759" y="110" width="80" height="138" fill="#15171b"/>
<rect x="798" y="110" width="41" height="90" fill="#1d2230"/>
<path d="M785 110 H839 V128 C820 122 800 116 785 110Z" fill="#4a4846"/>
<path d="M800 113 L839 120 M805 118 L839 125" stroke="#8a8886" stroke-width="1.2"/>
<rect x="806" y="162" width="22" height="30" fill="#cfcfd0"/>
<rect x="806" y="175" width="22" height="6" fill="#e6e6e6"/>
<rect x="759" y="110" width="6" height="108" fill="#23252a"/>
<!-- floor -->
<path d="M759 218 L800 199 L839 196 L1008 226 V248 H759Z" fill="url(#floor)"/>
<path d="M839 196 L1008 226 V248 H900Z" fill="#d8cec4"/>
<!-- sofa -->
<path d="M916 203 C930 199 990 199 1008 200 V226 H918 C912 220 912 208 916 203Z" fill="#8e8e8e"/>
<path d="M918 215 H1008 V226 H918Z" fill="#7e7e7e"/>
<!-- table -->
<ellipse cx="985" cy="216" rx="20" ry="3.6" fill="#f2f2f2"/>
<path d="M972 218 L966 240 M985 219 V245 M998 218 L1003 240" stroke="#e6e6e6" stroke-width="1.2"/>
<path d="M982 212 C982 208 988 208 988 212Z" fill="#fafafa"/>
<ellipse cx="985" cy="240" rx="22" ry="4" fill="#b5a89a" opacity="0.6"/>
<!-- purple strip near sofa -->
<rect x="900" y="201" width="16" height="5" fill="#c6a6d6" opacity="0.8"/>
<!-- logo text -->
<g font-family="Liberation Sans" font-weight="bold" fill="#1c3558" text-anchor="end">
<text x="961" y="150.3" font-size="5" letter-spacing="1.2" font-weight="normal">COMISIÓN DE</text>
<text x="961" y="157.6" font-size="7.4" letter-spacing="0.3">DERECHOS</text>
<text x="961" y="164.8" font-size="7.4" letter-spacing="0.3">HUMANOS</text>
<text x="961" y="169.3" font-size="3.6" font-weight="normal" opacity="0.8">DEL ESTADO DE MÉXICO</text>
</g>
<g fill="#2aa2e0">
<path d="M964 155 H980 V170 H968 C965.5 170 964 168.5 964 166Z"/>
<path d="M981 145 C986 144 990 147 990 152 V166 C990 169 988 170 985 170 H981Z"/>
<path d="M966 148 H979 V153 H966Z"/>
</g>
<path d="M992 146 C996 152 996 162 993 172" stroke="#3aa04a" stroke-width="3" fill="none" stroke-dasharray="2 1.4"/>
<!-- man -->
<path d="M786 248 C790 232 800 218 822 208 L842 199 L884 194 C904 200 925 206 940 220 C948 230 952 240 954 248Z" fill="#6b6763"/>
<path d="M856 214 L900 214 L904 248 H852Z" fill="#3a3232"/>
<path d="M824 248 C822 232 826 214 838 200 C846 204 852 214 858 226 C864 236 868 242 872 248Z" fill="#3ea84f"/>
<path d="M812 238 C818 236 826 238 830 242 V248 H810Z" fill="#3ea84f"/>
<path d="M884 193 C894 196 902 204 905 214 C906 220 905 226 904 230 C898 228 890 226 884 226 C886 216 886 204 884 193Z" fill="#38a04a"/>
<path d="M845 212 C848 210 853 212 856 216 L854 224 C850 222 846 218 845 212Z" fill="#e8b84a"/>
<path d="M874 248 L882 232 L887 234 L880 248Z" fill="#2a4ab8"/>
<ellipse cx="910" cy="241" rx="11" ry="9" fill="#e2ecdf"/><ellipse cx="910" cy="242" rx="7.5" ry="7" fill="#3a9a4a"/>
<path d="M840 152 C838 172 840 196 849 212 C855 220 860 223 866 223 C873 223 880 218 884 210 C890 196 891 172 889 152 C884 141 875 137 864 137 C852 137 844 143 840 152Z" fill="#c6967c"/>
<path d="M848 147 C856 142 874 142 883 149 C881 160 874 163 864 163 C853 163 848 158 848 147Z" fill="#d8aa90" opacity="0.6"/>
<path d="M834 175 C830 150 838 130 862 127.5 C884 126 896 140 894 165 L891 178 C890 162 888 152 880 146 C868 140 850 142 842 152 C838 160 836 168 834 175Z" fill="#3a2a22"/>
<path d="M892 172 C896 172 898 178 896 186 C894 190 890 190 889 186Z" fill="#b98a72"/>
<path d="M844 196 C846 210 854 221 866 222 C878 222 886 212 888 196 C882 204 876 206 866 206 C856 206 850 204 844 196Z" fill="#8c5238"/>
<path d="M852 196 C858 193 872 193 880 196 C874 199 858 199 852 196Z" fill="#7a4430"/>
<path d="M858 203 C862 205 869 205 873 203 C869 207 862 207 858 203Z" fill="#c08a78"/>
<g fill="none" stroke="#4e4440" stroke-width="1"><path d="M838 171 C846 169 856 170 860 173 C860 180 858 186 850 187 C842 187 840 182 838 171Z"/><path d="M866 172 C872 169 884 169 890 171 C890 182 886 186 878 187 C870 186 866 180 866 172Z"/><path d="M860 174 C862 172 864 172 866 174"/></g>
<ellipse cx="850" cy="178" rx="3" ry="1.3" fill="#3a2a22"/><ellipse cx="877" cy="178" rx="3" ry="1.3" fill="#3a2a22"/>
</svg>
</div>

<!-- slide -->
<div class="a" style="left:173px;top:252px;width:666px;height:375px;background:#151515"></div>
<div class="a" style="left:174px;top:253px;width:664px;height:373px;background:#fff;overflow:hidden">
<svg style="left:0;top:0" width="664" height="373" viewBox="0 0 664 373">
<defs>
<pattern id="dam" width="60" height="46" patternUnits="userSpaceOnUse" patternTransform="translate(-6 -2)">
<g fill="none" stroke="#fff" stroke-width="3" stroke-linecap="round">
<path d="M30 23 C22 22 18 15 22 10 C25 6 31 8 30 13"/>
<path d="M30 23 C38 24 42 31 38 36 C35 40 29 38 30 33"/>
<path d="M6 44 C14 34 22 30 30 23 C38 16 46 12 56 2"/>
</g>
<g fill="#fff">
<path d="M8 6 C14 8 16 14 14 20 C8 18 6 12 8 6Z"/>
<path d="M52 40 C46 38 44 32 46 26 C52 28 54 34 52 40Z"/>
<path d="M44 8 C48 12 48 16 44 20 C40 16 40 12 44 8Z"/>
<path d="M16 26 C20 30 20 34 16 38 C12 34 12 30 16 26Z"/>
<circle cx="52" cy="16" r="2.4"/><circle cx="8" cy="30" r="2.4"/><circle cx="36" cy="4" r="1.8"/><circle cx="24" cy="42" r="1.8"/>
</g>
</pattern>
<clipPath id="cD"><polygon points="0,0 79,0 35,44 0,44"/><polygon points="0,44 77.5,44 30.5,91 0,91"/><polygon points="0,91 70,91 24,137 0,137"/></clipPath>
<clipPath id="cL"><polygon points="79,0 162,0 118,44 35,44"/><polygon points="77.5,44 160.5,44 113.5,91 30.5,91"/><polygon points="70,91 114,91 68,137 24,137"/></clipPath>
<g id="corner">
<polygon points="0,0 79,0 35,44 0,44" fill="#c8ebf6"/>
<polygon points="79,0 162,0 118,44 35,44" fill="#e9f7fc"/>
<polygon points="0,44 77.5,44 30.5,91 0,91" fill="#d8f1f9"/>
<polygon points="77.5,44 160.5,44 113.5,91 30.5,91" fill="#eaf8fc"/>
<polygon points="120,44 160.5,44 113.5,91 73,91" fill="#e2f5fb"/>
<polygon points="0,91 70,91 24,137 0,137" fill="#e6f6fb"/>
<polygon points="0,91 29.5,91 0,120.5" fill="#b2e2f1"/>
<polygon points="70,91 114,91 68,137 24,137" fill="#ecf9fd"/>
<rect x="0" y="0" width="170" height="140" fill="url(#dam)" clip-path="url(#cD)" opacity="0.75"/>
<rect x="0" y="0" width="170" height="140" fill="url(#dam)" clip-path="url(#cL)" opacity="0.3"/>
</g>
</defs>
<use href="#corner"/>
<use href="#corner" transform="matrix(-1 0 0 1 664 0)"/>
<use href="#corner" transform="matrix(1 0 0 -1 0 373)"/>
<use href="#corner" transform="matrix(-1 0 0 -1 664 373)"/>
</svg>
<svg style="left:0;top:0" width="664" height="373" viewBox="174 253 664 373">
<defs>
<linearGradient id="bg1" x1="0" y1="0" x2="0" y2="1">
<stop offset="0" stop-color="#d93566"/><stop offset="0.3" stop-color="#cf3658"/><stop offset="0.5" stop-color="#b02a36"/><stop offset="0.68" stop-color="#a51f24"/><stop offset="0.85" stop-color="#d8261c"/><stop offset="1" stop-color="#e2401e"/>
</linearGradient>
<linearGradient id="bg3" x1="0" y1="0" x2="0" y2="1"><stop offset="0" stop-color="#e85a2a"/><stop offset="1" stop-color="#f5a035"/></linearGradient>
<linearGradient id="bg2" x1="0" y1="0" x2="1" y2="0"><stop offset="0" stop-color="#f07a30" stop-opacity="0.5"/><stop offset="0.4" stop-color="#f07a30" stop-opacity="0"/><stop offset="0.7" stop-color="#8a1418" stop-opacity="0.35"/><stop offset="1" stop-color="#c02a40" stop-opacity="0.2"/></linearGradient>
</defs>
<g stroke-width="5.8">
<path d="M204 392.5 L225.5 414.5" stroke="#d81f3e"/>
<path d="M187.5 411 L213 424.5" stroke="#d5213f"/>
<path d="M178.5 431.5 L206 438.5" stroke="#d23a55"/>
<path d="M175 453 L203.6 453" stroke="#d6506a"/>
</g>
<path d="M254 427 C258 425 262 426 266 428 L270 427 L273 432 L277 433 L279 438 L284 439 L286 444 L292 446 L293 452 L299 455 L300 461 L305 464 L306 470 L311 473 L314 480 L316 489 C316 505 308 518 300 530 C296 537 293 545 292 554 L236.5 554 C235.5 545 232 537 227 530 C218 516 210 504 210 486 C210 456 228 434 254 427Z" fill="url(#bg1)"/>
<path d="M212 478 C218 468 230 466 238 474 C242 486 236 494 226 498 C218 498 212 490 212 478Z" fill="#ee8a3e" opacity="0.6"/>
<path d="M216 500 C224 496 234 502 238 512 C230 516 222 514 216 506Z" fill="#f0a040" opacity="0.45"/>
<path d="M262 445 C272 440 286 446 290 456 C282 462 266 460 262 452Z" fill="#e0486a" opacity="0.5"/>
<path d="M272 494 C284 486 300 490 308 498 C304 514 294 520 284 524 C274 518 270 506 272 494Z" fill="#8e161a" opacity="0.5"/>
<path d="M240 505 C250 500 260 504 264 515 C257 524 246 522 240 514Z" fill="#901818" opacity="0.5"/>
<g fill="url(#bg3)">
<rect x="235" y="554" width="58" height="9" rx="4.5"/><rect x="235" y="562" width="58" height="9" rx="4.5"/><rect x="235.5" y="570" width="57" height="9" rx="4.5"/><rect x="236" y="578" width="56" height="9" rx="4.5"/><rect x="237" y="586" width="54" height="9" rx="4.5"/>
</g>
<path d="M266 556 H292 V592 H266Z" fill="#f8c040" opacity="0.25"/>
<path d="M254 594 C254 600 258 603 263.5 603 C269 603 273 600 273 594Z" fill="#f08a35"/>
<path d="M240 563 H288 M240 571 H288 M241 579 H287 M242 587 H286" stroke="#fff" stroke-width="1.3" opacity="0.9"/>
<path d="M236 470 C252 465 276 465 292 470" fill="none" stroke="#f2f2f2" stroke-width="1.7"/>
<path d="M236 470 L256 521 M292 470 L272 521 M248 467 L259 500 M281 467 L270 500" fill="none" stroke="#f2f2f2" stroke-width="1.6"/>
<path d="M260 481 C260 475.5 268 475.5 268 481 V517 C274 520 275 530 270 536 V547 C270 550 272 551 272 554 H256 C256 551 258 550 258 547 V536 C253 530 254 520 260 517Z" fill="#ebebeb"/>
<path d="M256 491 H272" stroke="#ebebeb" stroke-width="1.8"/>
<path transform="translate(267 378.8) scale(25.600000000000023 20.69999999999999)" d="M0 0.55 C0.2 0.5 0.35 0.55 0.45 0.6 C0.5 0.4 0.6 0.15 0.78 0 C0.75 0.25 0.7 0.45 0.65 0.6 C0.75 0.62 0.9 0.6 1 0.55 C0.9 0.7 0.75 0.8 0.6 0.85 C0.5 1 0.4 0.95 0.35 0.8 C0.25 0.7 0.1 0.62 0 0.55Z" fill="#c8304c"/><path transform="translate(272.8 403.5) scale(34.599999999999966 15.800000000000011)" d="M0 0.2 C0.25 0.3 0.45 0.5 0.55 0.6 C0.7 0.5 0.85 0.5 1 0.6 C0.85 0.75 0.7 0.85 0.55 0.9 C0.45 1 0.35 0.85 0.3 0.7 C0.2 0.55 0.1 0.4 0 0.2Z" fill="#e8806e"/><path d="M256 419 L270.8 426 L266 433 Z" fill="#d9406a"/><ellipse cx="278.7" cy="436" rx="3.8" ry="6" fill="#e6506a"/><path d="M291.6 439 C295 432 304 429 310.4 429 C307 435 299 439 291.6 439Z" fill="#e8742f"/><path transform="translate(312 428) scale(19 17)" d="M0 0.55 C0.2 0.5 0.35 0.55 0.45 0.6 C0.5 0.4 0.6 0.15 0.78 0 C0.75 0.25 0.7 0.45 0.65 0.6 C0.75 0.62 0.9 0.6 1 0.55 C0.9 0.7 0.75 0.8 0.6 0.85 C0.5 1 0.4 0.95 0.35 0.8 C0.25 0.7 0.1 0.62 0 0.55Z" fill="#e07a3a"/><circle cx="330" cy="433.5" r="3" fill="#1b2e6e"/><path transform="translate(351 426) scale(-16 16)" d="M0 0.38 C0.14 0.3 0.3 0.38 0.42 0.55 C0.45 0.47 0.5 0.44 0.56 0.46 C0.64 0.26 0.8 0.1 1 0.04 C0.9 0.3 0.78 0.55 0.64 0.72 C0.62 0.86 0.54 1 0.44 0.96 C0.4 0.86 0.37 0.76 0.31 0.66 C0.2 0.56 0.1 0.48 0 0.38Z" fill="#273272"/><ellipse cx="291" cy="451.5" rx="6.4" ry="4.5" fill="#e8702f"/><path transform="translate(360.8 448) scale(-28.80000000000001 15.800000000000011)" d="M0 0.2 C0.25 0.3 0.45 0.5 0.55 0.6 C0.7 0.5 0.85 0.5 1 0.6 C0.85 0.75 0.7 0.85 0.55 0.9 C0.45 1 0.35 0.85 0.3 0.7 C0.2 0.55 0.1 0.4 0 0.2Z" fill="#c83a3a"/><path d="M316 457 C321 461 327 470 330 480 C326 481 322 477 319 470 C317 466 316 461 316 457Z" fill="#d6503a"/><path d="M369.6 432 C376 428 384.5 436 384 445 C382 450 378 453 374 453 C375 446 373 438 369.6 432Z" fill="#e0242e"/><path d="M330 485 L339 486 L337 491 L331 490Z" fill="#c8304a"/><circle cx="305.7" cy="469.2" r="2" fill="#d23a50"/><circle cx="350" cy="369.6" r="4" fill="#ef8aa8"/><path transform="translate(338 375.5) scale(28.69999999999999 19.80000000000001)" d="M0 0.2 C0.25 0.3 0.45 0.5 0.55 0.6 C0.7 0.5 0.85 0.5 1 0.6 C0.85 0.75 0.7 0.85 0.55 0.9 C0.45 1 0.35 0.85 0.3 0.7 C0.2 0.55 0.1 0.4 0 0.2Z" fill="#1f5fd8"/><path transform="translate(372.6 374.5) scale(25.69999999999999 16.80000000000001)" d="M0 0.38 C0.14 0.3 0.3 0.38 0.42 0.55 C0.45 0.47 0.5 0.44 0.56 0.46 C0.64 0.26 0.8 0.1 1 0.04 C0.9 0.3 0.78 0.55 0.64 0.72 C0.62 0.86 0.54 1 0.44 0.96 C0.4 0.86 0.37 0.76 0.31 0.66 C0.2 0.56 0.1 0.48 0 0.38Z" fill="#3a8cf0"/><path transform="translate(346 399.5) scale(-30 16.80000000000001)" d="M0 0.38 C0.14 0.3 0.3 0.38 0.42 0.55 C0.45 0.47 0.5 0.44 0.56 0.46 C0.64 0.26 0.8 0.1 1 0.04 C0.9 0.3 0.78 0.55 0.64 0.72 C0.62 0.86 0.54 1 0.44 0.96 C0.4 0.86 0.37 0.76 0.31 0.66 C0.2 0.56 0.1 0.48 0 0.38Z" fill="#0d2a8a"/><path transform="translate(353.8 399.5) scale(32.69999999999999 22.80000000000001)" d="M0 0.38 C0.14 0.3 0.3 0.38 0.42 0.55 C0.45 0.47 0.5 0.44 0.56 0.46 C0.64 0.26 0.8 0.1 1 0.04 C0.9 0.3 0.78 0.55 0.64 0.72 C0.62 0.86 0.54 1 0.44 0.96 C0.4 0.86 0.37 0.76 0.31 0.66 C0.2 0.56 0.1 0.48 0 0.38Z" fill="#5b6fd8"/><circle cx="363" cy="417" r="4.5" fill="#c95f9a"/><path transform="translate(420 392.6) scale(-20.69999999999999 18.799999999999955)" d="M0 0.2 C0.25 0.3 0.45 0.5 0.55 0.6 C0.7 0.5 0.85 0.5 1 0.6 C0.85 0.75 0.7 0.85 0.55 0.9 C0.45 1 0.35 0.85 0.3 0.7 C0.2 0.55 0.1 0.4 0 0.2Z" fill="#a080d0"/><path transform="translate(384.5 419.3) scale(28.5 11.699999999999989)" d="M0 0.2 C0.25 0.3 0.45 0.5 0.55 0.6 C0.7 0.5 0.85 0.5 1 0.6 C0.85 0.75 0.7 0.85 0.55 0.9 C0.45 1 0.35 0.85 0.3 0.7 C0.2 0.55 0.1 0.4 0 0.2Z" fill="#e06a90"/>
</svg>
<div class="t" style="left:210px;top:41.2px;font-size:23.3px;font-weight:bold;color:#787878;transform:scaleX(0.955)">Ejercicio de reflexión</div>
<div class="t" style="left:264.5px;top:91.6px;font-size:14.5px;color:#111;transform:scaleX(1.05)">Objetivo:</div>
<div class="t" style="left:265px;top:128.4px;width:358px;font-size:14.5px;color:#111;text-align:justify;text-align-last:justify">Reflexionar sobre tu persona, fortalecer tus</div>
<div class="t" style="left:265px;top:158.5px;width:358px;font-size:14.5px;color:#111;text-align:justify;text-align-last:justify">cualidades y minimizar tus defectos para estar en</div>
<div class="t" style="left:265px;top:188px;width:358px;font-size:14.5px;color:#111;text-align:justify;text-align-last:justify">equilibrio y así brindar un mejor servicio a los</div>
<div class="t" style="left:265px;top:218.2px;font-size:14.5px;color:#111;transform:scaleX(1.025)">usuarios que atiendes.</div>
<div class="t" style="left:265px;top:254.8px;font-size:14.5px;color:#111;transform:scaleX(1.03)">Instrucciones:</div>
<div class="t" style="left:265px;top:291.9px;font-size:14.5px;color:#111;transform:scaleX(1.02)">Paso 1. Contesta lo que a continuación se solicita:</div>
</div>
<!-- slide nav -->
<svg style="left:191px;top:655px" width="10" height="17"><path d="M8.8 0.6 L1 8.3 L8.8 16" fill="none" stroke="#7b7fd0" stroke-width="1.2"/></svg>
<div class="t" style="left:227.5px;top:655.9px;font-size:14.5px;color:#d6d6d6;transform:scaleX(0.99)">23 de 31</div>
<svg style="left:312px;top:655px" width="10" height="17"><path d="M1 0.6 L8.8 8.3 L1 16" fill="none" stroke="#e0e0e0" stroke-width="1.2"/></svg>
<svg style="left:349px;top:654px" width="21" height="20"><path d="M0.6 2 C0.6 1.2 1.2 0.6 2 0.6 H7.6 V6.8 H0.6Z M8.8 0.6 H14.2 C15 0.6 15.6 1.2 15.6 2 V5 M0.6 8 H5.6 V14 H0.6Z" fill="none" stroke="#e6e6e6" stroke-width="1.2"/><rect x="6.6" y="6.2" width="13" height="13" fill="none" stroke="#f0f0f0" stroke-width="1.3"/></svg>
<svg style="left:391px;top:660px" width="20" height="5"><circle cx="2.2" cy="2.6" r="1.8" fill="#e6e6e6"/><circle cx="10" cy="2.6" r="1.8" fill="#e6e6e6"/><circle cx="17.8" cy="2.6" r="1.8" fill="#e6e6e6"/></svg>
<div class="a" style="left:433px;top:647px;width:1px;height:33px;background:#3d3d3d"></div>
<svg style="left:457px;top:653px" width="17" height="19"><path d="M1.6 1 L15.2 9.6 L8.6 11 L3.6 17.8Z" fill="#fff" stroke="#fff" stroke-width="1" stroke-linejoin="round"/></svg>
<div class="a" style="left:447px;top:681.5px;width:36px;height:2.5px;border-radius:2px;background:#a8abf0"></div>
<svg style="left:498px;top:648px" width="20" height="32">
<defs>
<linearGradient id="pg1" x1="0" y1="0" x2="1" y2="0"><stop offset="0" stop-color="#4a4a4a"/><stop offset="0.35" stop-color="#6e6e6e"/><stop offset="1" stop-color="#3e3e3e"/></linearGradient>
<linearGradient id="pr1" x1="0" y1="0" x2="1" y2="0"><stop offset="0" stop-color="#9e0f20"/><stop offset="0.4" stop-color="#e0223a"/><stop offset="1" stop-color="#8e0c1c"/></linearGradient>
<linearGradient id="pb1" x1="0" y1="0" x2="1" y2="0"><stop offset="0" stop-color="#0e0e0e"/><stop offset="0.4" stop-color="#3a3a3a"/><stop offset="1" stop-color="#0a0a0a"/></linearGradient>
<linearGradient id="py1" x1="0" y1="0" x2="1" y2="0"><stop offset="0" stop-color="#c8c414"/><stop offset="0.4" stop-color="#f4f02a"/><stop offset="1" stop-color="#b8b410"/></linearGradient>
</defs>
<path d="M9.8 1.5 C8.6 1.5 8.2 3.2 9 4.8 L9.5 9 L10.1 9 L10.6 4.8 C11.4 3.2 11 1.5 9.8 1.5Z" fill="#c5102a"/>
<path d="M3.6 9 H16 C16.9 9 17.6 9.7 17.6 10.6 V31.4 H1.4 V11 C1.4 9.9 2.4 9 3.6 9Z" fill="url(#pg1)"/>
<circle cx="9.6" cy="24" r="3.4" fill="#555" stroke="#7a7a7a" stroke-width="0.8"/>
<path d="M8.5 15 L10.5 15" stroke="#888" stroke-width="0.8"/>
</svg>
<svg style="left:541px;top:648px" width="20" height="32">
<path d="M9.6 1 C8.3 1 7 3 6.5 5.6 L12.9 5.6 C12.3 3 11 1 9.6 1Z" fill="#e01830"/>
<path d="M6.5 5.6 L12.9 5.6 C15.5 9 17.6 15 18.6 21 H0.8 C1.7 15 4 9 6.5 5.6Z" fill="url(#pb1)"/>
<path d="M0.8 21 H18.6 L18.8 29.5 C18.8 30.6 18 31.4 17 31.4 H2.4 C1.4 31.4 0.6 30.6 0.6 29.5Z" fill="url(#pr1)"/>
</svg>
<svg style="left:582px;top:649px" width="24" height="32">
<path d="M7.4 3.5 L16.4 0.8 L17 7 H7Z" fill="#f2ee30"/>
<path d="M7 7 H17 L17 11 C20.5 12 23.2 14.6 23.2 18 V23.5 H0.6 V18 C0.6 14.6 3.5 12 7 11Z" fill="url(#pg1)"/>
<path d="M0.6 23.5 H23.2 V29.4 C23.2 30.4 22.4 31.2 21.4 31.2 H2.4 C1.4 31.2 0.6 30.4 0.6 29.4Z" fill="url(#py1)"/>
</svg>
<svg style="left:626px;top:649px" width="18" height="32">
<path d="M1 4.5 C1 2.3 2.6 0.8 4.4 0.8 H13.4 C15.3 0.8 17 2.3 17 4.5 V8 H1Z" fill="#f09aa8"/>
<path d="M1 8 H17 V29.4 C17 30.4 16.2 31.2 15.2 31.2 H2.8 C1.8 31.2 1 30.4 1 29.4Z" fill="url(#pg1)"/>
<path d="M1 18.5 H17" stroke="#3a3a3a" stroke-width="0.8"/>
</svg>
<!-- tooltip -->
<div class="a" style="left:176.5px;top:689px;width:85px;height:27px;border-radius:4px;background:#474747"></div>
<svg style="left:189px;top:683px" width="16" height="8"><path d="M0 7 L7.5 0 L15 7Z" fill="#474747"/></svg>
<div class="t" style="left:187px;top:697.8px;font-size:12.8px;color:#f0f0f0;transform:scaleX(0.97)">Retroceder</div>

<!-- participants panel -->
<div class="a" style="left:3px;top:105px;width:1px;height:650px;background:#1a1a1a"></div>
<div class="a" style="left:1006px;top:252px;width:1px;height:500px;background:#1b1b1b"></div>
<div class="a" style="left:1012px;top:105px;width:1px;height:654px;background:#161616"></div>
<div class="a" style="left:1013px;top:105px;width:337px;height:654px;background:#1f1f1f"></div>
<div class="t" style="left:1035px;top:129.5px;font-size:18px;font-weight:bold;color:#fff;transform:scaleX(0.925)">Participantes</div>
<svg style="left:1271px;top:136px" width="15" height="4"><circle cx="1.6" cy="1.7" r="1.4" fill="#e6e6e6"/><circle cx="7.1" cy="1.7" r="1.4" fill="#e6e6e6"/><circle cx="12.6" cy="1.7" r="1.4" fill="#e6e6e6"/></svg>
<svg style="left:1306px;top:132px" width="13" height="13"><path d="M0.6 0.6 L12.2 12.2 M12.2 0.6 L0.6 12.2" stroke="#e6e6e6" stroke-width="1.2"/></svg>
<div class="a" style="left:1013px;top:167px;width:337px;height:1px;background:#141414"></div>
<div class="a" style="left:1035px;top:186px;width:295px;height:32px;border-radius:4px;background:#2c2c2c"></div>
<div class="t" style="left:1047.5px;top:195px;font-size:14.5px;color:#bdbdbd;transform:scaleX(1.0)">Escribe un nombre</div>
<svg style="left:1303px;top:195.5px" width="16" height="16"><circle cx="6.3" cy="6.3" r="5.2" fill="none" stroke="#f0f0f0" stroke-width="1.4"/><path d="M10.2 10.2 L14.8 14.8" stroke="#f0f0f0" stroke-width="1.5" stroke-linecap="round"/></svg>
<div class="a" style="left:1035px;top:230px;width:293px;height:32px;border:1px solid #3f3f3f;border-radius:4px;background:#242424"></div>
<svg style="left:1100px;top:239.5px" width="17" height="15"><path d="M5.8 1.2 H3.4 C2 1.2 1 2.2 1 3.6 V11.6 C1 13 2 14 3.4 14 H11.4 C12.8 14 13.8 13 13.8 11.6 V10.2" fill="none" stroke="#f0f0f0" stroke-width="1.2" stroke-linecap="round"/><path d="M10.2 1 L15.6 5.8 L10.2 10.4 V7.8 C7.6 7.8 5.8 8.8 4.6 11 C4.8 7.4 6.8 4.6 10.2 4.1 Z" fill="none" stroke="#f0f0f0" stroke-width="1.2" stroke-linejoin="round"/></svg>
<div class="t" style="left:1128px;top:240px;font-size:15px;font-weight:bold;color:#fff;transform:scaleX(0.94)">Compartir invitación</div>
<svg style="left:1022px;top:282px" width="8" height="5"><path d="M0 0 H7.5 L3.75 4.5Z" fill="#bdbdbd"/></svg>
<div class="t" style="left:1036.5px;top:277.6px;font-size:13px;color:#e6e6e6;transform:scaleX(0.965)">Moderadores (78)</div>
<div class="a" style="left:1211px;top:271.5px;width:115px;height:23px;border:1px solid #444;border-radius:4px;background:#242424"></div>
<div class="t" style="left:1223px;top:279px;font-size:13px;font-weight:bold;color:#fff;transform:scaleX(0.905)">Silenciar a todos</div>
<div class="a" style="left:1032px;top:310.5px;width:38px;height:38px;border:2px solid #f8d22a;border-radius:50%"></div><div class="a" style="left:1036px;top:314.5px;width:34px;height:34px;border-radius:50%;background:#c8d6ea"></div><div class="t" style="left:1036px;top:325.6px;width:34px;text-align:center;font-size:13.3px;color:#2f4b7c;-webkit-text-stroke:0.45px #2f4b7c;transform:scaleX(0.95);transform-origin:50% 0">BB</div><div class="t" style="left:1078.5px;top:317.7px;font-size:14.5px;color:#fff;transform:scaleX(0.965)">Barbara Vianey Bautista ...</div><div class="t" style="left:1078.5px;top:337.2px;font-size:12.5px;color:#adadad;transform:scaleX(0.97)">Externo</div><div class="a" style="left:1261px;top:318.0px;width:40px;height:26px;border-radius:5px;background:#3c3c3c"></div><div class="t" style="left:1266.5px;top:324.1px;font-size:14.5px;color:#fff">1</div><svg style="left:1281px;top:322.0px" width="17" height="19.0" viewBox="0 0 17 19"><path transform="translate(17 0) scale(-1 1)" d="M4.2 10.5 V3.6 C4.2 2.7 4.8 2.1 5.6 2.1 C6.4 2.1 7 2.7 7 3.6 V8.6 V1.9 C7 1 7.6 0.4 8.4 0.4 C9.2 0.4 9.8 1 9.8 1.9 V8.6 V2.6 C9.8 1.7 10.4 1.1 11.2 1.1 C12 1.1 12.6 1.7 12.6 2.6 V9.6 V5.2 C12.6 4.3 13.2 3.7 14 3.7 C14.8 3.7 15.4 4.3 15.4 5.2 V11.4 C15.4 15.6 12.7 18.6 8.6 18.6 C5.6 18.6 3.8 17 2.5 14.6 L0.9 11.7 C0.5 10.9 0.7 10.1 1.4 9.7 C2.1 9.3 2.9 9.5 3.4 10.2 Z" fill="url(#handg)" stroke="#eaa21a" stroke-width="0.4"/></svg><svg style="left:1311px;top:322.5px" width="18.0" height="18.0" viewBox="0 0 18 18"><path d="M6 4.2 C6 2.5 7.3 1.2 9 1.2 C10.7 1.2 12 2.5 12 4.2 V8.6 C12 9 11.9 9.4 11.8 9.8 M10.6 11.6 C10.1 11.9 9.6 12 9 12 C7.3 12 6 10.7 6 9 V7" fill="none" stroke="#d6d6d6" stroke-width="1.3" stroke-linecap="round"/><path d="M3.4 8.6 C3.4 11.8 5.9 14.4 9 14.4 C10.3 14.4 11.4 14 12.3 13.3 M14.4 10.8 C14.5 10.1 14.6 9.4 14.6 8.6 M9 14.4 V17" fill="none" stroke="#d6d6d6" stroke-width="1.3" stroke-linecap="round"/><path d="M1.5 1.5 L16.5 16.5" stroke="#d6d6d6" stroke-width="1.3" stroke-linecap="round"/></svg><div class="a" style="left:1032px;top:361px;width:38px;height:38px;border:2px solid #f8d22a;border-radius:50%"></div><div class="a" style="left:1036px;top:365px;width:34px;height:34px;border-radius:50%;background:#fde8d0"></div><div class="t" style="left:1036px;top:376.1px;width:34px;text-align:center;font-size:13.3px;color:#8e5b25;-webkit-text-stroke:0.45px #8e5b25;transform:scaleX(0.95);transform-origin:50% 0">LA</div><div class="t" style="left:1078.5px;top:368.2px;font-size:14.5px;color:#fff;transform:scaleX(0.92)">LETICIA ENRIQU...</div><div class="t" style="left:1078.5px;top:387.7px;font-size:12.5px;color:#adadad;transform:scaleX(0.97)">Invitado de la reunión</div><div class="a" style="left:1261px;top:368.5px;width:40px;height:26px;border-radius:5px;background:#3c3c3c"></div><div class="t" style="left:1266.5px;top:374.6px;font-size:14.5px;color:#fff">2</div><svg style="left:1281px;top:372.5px" width="17" height="19.0" viewBox="0 0 17 19"><path transform="translate(17 0) scale(-1 1)" d="M4.2 10.5 V3.6 C4.2 2.7 4.8 2.1 5.6 2.1 C6.4 2.1 7 2.7 7 3.6 V8.6 V1.9 C7 1 7.6 0.4 8.4 0.4 C9.2 0.4 9.8 1 9.8 1.9 V8.6 V2.6 C9.8 1.7 10.4 1.1 11.2 1.1 C12 1.1 12.6 1.7 12.6 2.6 V9.6 V5.2 C12.6 4.3 13.2 3.7 14 3.7 C14.8 3.7 15.4 4.3 15.4 5.2 V11.4 C15.4 15.6 12.7 18.6 8.6 18.6 C5.6 18.6 3.8 17 2.5 14.6 L0.9 11.7 C0.5 10.9 0.7 10.1 1.4 9.7 C2.1 9.3 2.9 9.5 3.4 10.2 Z" fill="url(#handg)" stroke="#eaa21a" stroke-width="0.4"/></svg><svg style="left:1311px;top:373px" width="18.0" height="18.0" viewBox="0 0 18 18"><path d="M6 4.2 C6 2.5 7.3 1.2 9 1.2 C10.7 1.2 12 2.5 12 4.2 V8.6 C12 9 11.9 9.4 11.8 9.8 M10.6 11.6 C10.1 11.9 9.6 12 9 12 C7.3 12 6 10.7 6 9 V7" fill="none" stroke="#d6d6d6" stroke-width="1.3" stroke-linecap="round"/><path d="M3.4 8.6 C3.4 11.8 5.9 14.4 9 14.4 C10.3 14.4 11.4 14 12.3 13.3 M14.4 10.8 C14.5 10.1 14.6 9.4 14.6 8.6 M9 14.4 V17" fill="none" stroke="#d6d6d6" stroke-width="1.3" stroke-linecap="round"/><path d="M1.5 1.5 L16.5 16.5" stroke="#d6d6d6" stroke-width="1.3" stroke-linecap="round"/></svg><div class="a" style="left:1032px;top:411.5px;width:38px;height:38px;border:2px solid #f8d22a;border-radius:50%"></div><div class="a" style="left:1036px;top:415.5px;width:34px;height:34px;border-radius:50%;background:#f3d8d1"></div><div class="t" style="left:1036px;top:426.6px;width:34px;text-align:center;font-size:13.3px;color:#8a3b2b;-webkit-text-stroke:0.45px #8a3b2b;transform:scaleX(0.95);transform-origin:50% 0">I</div><div class="t" style="left:1078.5px;top:418.7px;font-size:14.5px;color:#fff;transform:scaleX(0.965)">Invitado (Invitado)</div><div class="t" style="left:1078.5px;top:438.2px;font-size:12.5px;color:#adadad;transform:scaleX(0.97)">Invitado de la reunión</div><div class="a" style="left:1261px;top:419.0px;width:40px;height:26px;border-radius:5px;background:#3c3c3c"></div><div class="t" style="left:1266.5px;top:425.1px;font-size:14.5px;color:#fff">3</div><svg style="left:1281px;top:423.0px" width="17" height="19.0" viewBox="0 0 17 19"><path transform="translate(17 0) scale(-1 1)" d="M4.2 10.5 V3.6 C4.2 2.7 4.8 2.1 5.6 2.1 C6.4 2.1 7 2.7 7 3.6 V8.6 V1.9 C7 1 7.6 0.4 8.4 0.4 C9.2 0.4 9.8 1 9.8 1.9 V8.6 V2.6 C9.8 1.7 10.4 1.1 11.2 1.1 C12 1.1 12.6 1.7 12.6 2.6 V9.6 V5.2 C12.6 4.3 13.2 3.7 14 3.7 C14.8 3.7 15.4 4.3 15.4 5.2 V11.4 C15.4 15.6 12.7 18.6 8.6 18.6 C5.6 18.6 3.8 17 2.5 14.6 L0.9 11.7 C0.5 10.9 0.7 10.1 1.4 9.7 C2.1 9.3 2.9 9.5 3.4 10.2 Z" fill="url(#handg)" stroke="#eaa21a" stroke-width="0.4"/></svg><svg style="left:1311px;top:423.5px" width="18.0" height="18.0" viewBox="0 0 18 18"><path d="M6 4.2 C6 2.5 7.3 1.2 9 1.2 C10.7 1.2 12 2.5 12 4.2 V8.6 C12 9 11.9 9.4 11.8 9.8 M10.6 11.6 C10.1 11.9 9.6 12 9 12 C7.3 12 6 10.7 6 9 V7" fill="none" stroke="#d6d6d6" stroke-width="1.3" stroke-linecap="round"/><path d="M3.4 8.6 C3.4 11.8 5.9 14.4 9 14.4 C10.3 14.4 11.4 14 12.3 13.3 M14.4 10.8 C14.5 10.1 14.6 9.4 14.6 8.6 M9 14.4 V17" fill="none" stroke="#d6d6d6" stroke-width="1.3" stroke-linecap="round"/><path d="M1.5 1.5 L16.5 16.5" stroke="#d6d6d6" stroke-width="1.3" stroke-linecap="round"/></svg><div class="a" style="left:1032px;top:462px;width:38px;height:38px;border:2px solid #f8d22a;border-radius:50%"></div><div class="a" style="left:1036px;top:466px;width:34px;height:34px;border-radius:50%;background:#d9d5f0"></div><div class="t" style="left:1036px;top:477.1px;width:34px;text-align:center;font-size:13.3px;color:#4b3f86;-webkit-text-stroke:0.45px #4b3f86;transform:scaleX(0.95);transform-origin:50% 0">CE</div><div class="t" style="left:1078.5px;top:469.2px;font-size:14.5px;color:#fff;transform:scaleX(0.965)">Cinthya Eunice (Invitado)</div><div class="t" style="left:1078.5px;top:488.7px;font-size:12.5px;color:#adadad;transform:scaleX(0.97)">Invitado de la reunión</div><div class="a" style="left:1261px;top:469.5px;width:40px;height:26px;border-radius:5px;background:#3c3c3c"></div><div class="t" style="left:1266.5px;top:475.6px;font-size:14.5px;color:#fff">4</div><svg style="left:1281px;top:473.5px" width="17" height="19.0" viewBox="0 0 17 19"><path transform="translate(17 0) scale(-1 1)" d="M4.2 10.5 V3.6 C4.2 2.7 4.8 2.1 5.6 2.1 C6.4 2.1 7 2.7 7 3.6 V8.6 V1.9 C7 1 7.6 0.4 8.4 0.4 C9.2 0.4 9.8 1 9.8 1.9 V8.6 V2.6 C9.8 1.7 10.4 1.1 11.2 1.1 C12 1.1 12.6 1.7 12.6 2.6 V9.6 V5.2 C12.6 4.3 13.2 3.7 14 3.7 C14.8 3.7 15.4 4.3 15.4 5.2 V11.4 C15.4 15.6 12.7 18.6 8.6 18.6 C5.6 18.6 3.8 17 2.5 14.6 L0.9 11.7 C0.5 10.9 0.7 10.1 1.4 9.7 C2.1 9.3 2.9 9.5 3.4 10.2 Z" fill="url(#handg)" stroke="#eaa21a" stroke-width="0.4"/></svg><svg style="left:1311px;top:474px" width="18.0" height="18.0" viewBox="0 0 18 18"><path d="M6 4.2 C6 2.5 7.3 1.2 9 1.2 C10.7 1.2 12 2.5 12 4.2 V8.6 C12 9 11.9 9.4 11.8 9.8 M10.6 11.6 C10.1 11.9 9.6 12 9 12 C7.3 12 6 10.7 6 9 V7" fill="none" stroke="#d6d6d6" stroke-width="1.3" stroke-linecap="round"/><path d="M3.4 8.6 C3.4 11.8 5.9 14.4 9 14.4 C10.3 14.4 11.4 14 12.3 13.3 M14.4 10.8 C14.5 10.1 14.6 9.4 14.6 8.6 M9 14.4 V17" fill="none" stroke="#d6d6d6" stroke-width="1.3" stroke-linecap="round"/><path d="M1.5 1.5 L16.5 16.5" stroke="#d6d6d6" stroke-width="1.3" stroke-linecap="round"/></svg><div class="a" style="left:1032px;top:512.5px;width:38px;height:38px;border:2px solid #f8d22a;border-radius:50%"></div><div class="a" style="left:1036px;top:516.5px;width:34px;height:34px;border-radius:50%;background:#d3ecf1"></div><div class="t" style="left:1036px;top:527.6px;width:34px;text-align:center;font-size:13.3px;color:#2c6a72;-webkit-text-stroke:0.45px #2c6a72;transform:scaleX(0.95);transform-origin:50% 0">YN</div><div class="t" style="left:1078.5px;top:519.7px;font-size:14.5px;color:#fff;transform:scaleX(0.965)">Yael Alejandro N...</div><div class="t" style="left:1078.5px;top:539.2px;font-size:12.5px;color:#adadad;transform:scaleX(0.97)">Invitado de la reunión</div><div class="a" style="left:1261px;top:520.0px;width:40px;height:26px;border-radius:5px;background:#3c3c3c"></div><div class="t" style="left:1266.5px;top:526.1px;font-size:14.5px;color:#fff">5</div><svg style="left:1281px;top:524.0px" width="17" height="19.0" viewBox="0 0 17 19"><path transform="translate(17 0) scale(-1 1)" d="M4.2 10.5 V3.6 C4.2 2.7 4.8 2.1 5.6 2.1 C6.4 2.1 7 2.7 7 3.6 V8.6 V1.9 C7 1 7.6 0.4 8.4 0.4 C9.2 0.4 9.8 1 9.8 1.9 V8.6 V2.6 C9.8 1.7 10.4 1.1 11.2 1.1 C12 1.1 12.6 1.7 12.6 2.6 V9.6 V5.2 C12.6 4.3 13.2 3.7 14 3.7 C14.8 3.7 15.4 4.3 15.4 5.2 V11.4 C15.4 15.6 12.7 18.6 8.6 18.6 C5.6 18.6 3.8 17 2.5 14.6 L0.9 11.7 C0.5 10.9 0.7 10.1 1.4 9.7 C2.1 9.3 2.9 9.5 3.4 10.2 Z" fill="url(#handg)" stroke="#eaa21a" stroke-width="0.4"/></svg><svg style="left:1311px;top:524.5px" width="18.0" height="18.0" viewBox="0 0 18 18"><path d="M6 4.2 C6 2.5 7.3 1.2 9 1.2 C10.7 1.2 12 2.5 12 4.2 V8.6 C12 9 11.9 9.4 11.8 9.8 M10.6 11.6 C10.1 11.9 9.6 12 9 12 C7.3 12 6 10.7 6 9 V7" fill="none" stroke="#d6d6d6" stroke-width="1.3" stroke-linecap="round"/><path d="M3.4 8.6 C3.4 11.8 5.9 14.4 9 14.4 C10.3 14.4 11.4 14 12.3 13.3 M14.4 10.8 C14.5 10.1 14.6 9.4 14.6 8.6 M9 14.4 V17" fill="none" stroke="#d6d6d6" stroke-width="1.3" stroke-linecap="round"/><path d="M1.5 1.5 L16.5 16.5" stroke="#d6d6d6" stroke-width="1.3" stroke-linecap="round"/></svg><svg style="left:1036px;top:567.5px" width="34" height="34"><defs><clipPath id="avc"><circle cx="17" cy="17" r="17"/></clipPath></defs><g clip-path="url(#avc)">
<rect width="34" height="34" fill="#2c2b2a"/><rect x="0" y="0" width="12" height="34" fill="#4a4846"/>
<path d="M0 26 C6 22 12 21 17 22 C24 21 30 23 34 26 V34 H0Z" fill="#6e7b90"/>
<path d="M12 22 L17 30 L21 22Z" fill="#2a2e3a"/>
<ellipse cx="16" cy="15" rx="7" ry="9" fill="#9c7a64"/>
<path d="M9 12 C9 6 13 4 17 4 C22 4 25 7 25 11 C22 9 18 8 14 9 C12 10 10 11 9 12Z" fill="#1e1a18"/>
<path d="M12 20 C14 22 18 22 20 20 C19 23 13 23 12 20Z" fill="#3a2a22"/>
<path d="M21 10 C24 8 29 9 31 14 C32 18 30 22 28 22 C27 18 25 15 21 14Z" fill="#c9aa98"/>
<rect x="8.5" y="14" width="1.3" height="4" fill="#a03028"/><rect x="23" y="15" width="1.3" height="4" fill="#a03028"/>
</g></svg><div class="t" style="left:1078.5px;top:570.7px;font-size:14.5px;color:#fff;transform:scaleX(0.965)">Alejandro Gomez Ibarra</div><div class="t" style="left:1078.5px;top:590.2px;font-size:12.5px;color:#adadad;transform:scaleX(0.97)">Organizador</div><svg style="left:1313px;top:575.5px" width="14" height="19"><rect x="3.4" y="0.5" width="7.2" height="12" rx="3.6" fill="#f2f2f2"/><path d="M1 8.2 C1 11.8 3.6 14.2 7 14.2 C10.4 14.2 13 11.8 13 8.2 M7 14.2 V18" fill="none" stroke="#f2f2f2" stroke-width="1.3" stroke-linecap="round"/></svg><div class="a" style="left:1036px;top:617.8px;width:34px;height:34px;border-radius:50%;background:#dad3ee"></div><div class="t" style="left:1036px;top:628.9px;width:34px;text-align:center;font-size:13.3px;color:#4f4390;-webkit-text-stroke:0.45px #4f4390;transform:scaleX(0.95);transform-origin:50% 0">A</div><div class="t" style="left:1078.5px;top:621.0px;font-size:14.5px;color:#fff;transform:scaleX(0.965)">alejandro (Invitado)</div><div class="t" style="left:1078.5px;top:640.5px;font-size:12.5px;color:#adadad;transform:scaleX(0.97)">Invitado de la reunión</div><svg style="left:1311px;top:625.8px" width="18.0" height="18.0" viewBox="0 0 18 18"><path d="M6 4.2 C6 2.5 7.3 1.2 9 1.2 C10.7 1.2 12 2.5 12 4.2 V8.6 C12 9 11.9 9.4 11.8 9.8 M10.6 11.6 C10.1 11.9 9.6 12 9 12 C7.3 12 6 10.7 6 9 V7" fill="none" stroke="#d6d6d6" stroke-width="1.3" stroke-linecap="round"/><path d="M3.4 8.6 C3.4 11.8 5.9 14.4 9 14.4 C10.3 14.4 11.4 14 12.3 13.3 M14.4 10.8 C14.5 10.1 14.6 9.4 14.6 8.6 M9 14.4 V17" fill="none" stroke="#d6d6d6" stroke-width="1.3" stroke-linecap="round"/><path d="M1.5 1.5 L16.5 16.5" stroke="#d6d6d6" stroke-width="1.3" stroke-linecap="round"/></svg><div class="a" style="left:1036px;top:668.3px;width:34px;height:34px;border-radius:50%;background:#d3ebef"></div><div class="t" style="left:1036px;top:679.4px;width:34px;text-align:center;font-size:13.3px;color:#2e6b71;-webkit-text-stroke:0.45px #2e6b71;transform:scaleX(0.95);transform-origin:50% 0">AR</div><div class="t" style="left:1078.5px;top:671.5px;font-size:14.5px;color:#fff;transform:scaleX(0.965)">Artemio Tenorio ... (Invitado)</div><div class="t" style="left:1078.5px;top:691.0px;font-size:12.5px;color:#adadad;transform:scaleX(0.97)">Invitado de la reunión</div><svg style="left:1311px;top:676.3px" width="18.0" height="18.0" viewBox="0 0 18 18"><path d="M6 4.2 C6 2.5 7.3 1.2 9 1.2 C10.7 1.2 12 2.5 12 4.2 V8.6 C12 9 11.9 9.4 11.8 9.8 M10.6 11.6 C10.1 11.9 9.6 12 9 12 C7.3 12 6 10.7 6 9 V7" fill="none" stroke="#d6d6d6" stroke-width="1.3" stroke-linecap="round"/><path d="M3.4 8.6 C3.4 11.8 5.9 14.4 9 14.4 C10.3 14.4 11.4 14 12.3 13.3 M14.4 10.8 C14.5 10.1 14.6 9.4 14.6 8.6 M9 14.4 V17" fill="none" stroke="#d6d6d6" stroke-width="1.3" stroke-linecap="round"/><path d="M1.5 1.5 L16.5 16.5" stroke="#d6d6d6" stroke-width="1.3" stroke-linecap="round"/></svg><div class="a" style="left:1036px;top:719px;width:34px;height:34px;border-radius:50%;background:#e3ebd6"></div><div class="t" style="left:1036px;top:730.1px;width:34px;text-align:center;font-size:13.3px;color:#4d6b2d;-webkit-text-stroke:0.45px #4d6b2d;transform:scaleX(0.95);transform-origin:50% 0">BC</div><div class="t" style="left:1078.5px;top:722.2px;font-size:14.5px;color:#fff;transform:scaleX(0.965)">Barbara Cervantes (Invitado)</div><div class="t" style="left:1078.5px;top:741.7px;font-size:12.5px;color:#adadad;transform:scaleX(0.97)">Invitado de la reunión</div><svg style="left:1311px;top:727px" width="18.0" height="18.0" viewBox="0 0 18 18"><path d="M6 4.2 C6 2.5 7.3 1.2 9 1.2 C10.7 1.2 12 2.5 12 4.2 V8.6 C12 9 11.9 9.4 11.8 9.8 M10.6 11.6 C10.1 11.9 9.6 12 9 12 C7.3 12 6 10.7 6 9 V7" fill="none" stroke="#d6d6d6" stroke-width="1.3" stroke-linecap="round"/><path d="M3.4 8.6 C3.4 11.8 5.9 14.4 9 14.4 C10.3 14.4 11.4 14 12.3 13.3 M14.4 10.8 C14.5 10.1 14.6 9.4 14.6 8.6 M9 14.4 V17" fill="none" stroke="#d6d6d6" stroke-width="1.3" stroke-linecap="round"/><path d="M1.5 1.5 L16.5 16.5" stroke="#d6d6d6" stroke-width="1.3" stroke-linecap="round"/></svg><div class="t" style="left:1201.5px;top:368.5px;font-size:14px;color:#e0e0e0;letter-spacing:-0.5px">···</div><div class="t" style="left:1202px;top:519px;font-size:14px;color:#e0e0e0;letter-spacing:-0.5px">···</div><div class="a" style="left:0;top:757px;width:1350px;height:1px;background:#1a1a1a"></div><div class="a" style="left:0;top:758px;width:1350px;height:1px;background:#dcdcdc"></div>
</body></html>
